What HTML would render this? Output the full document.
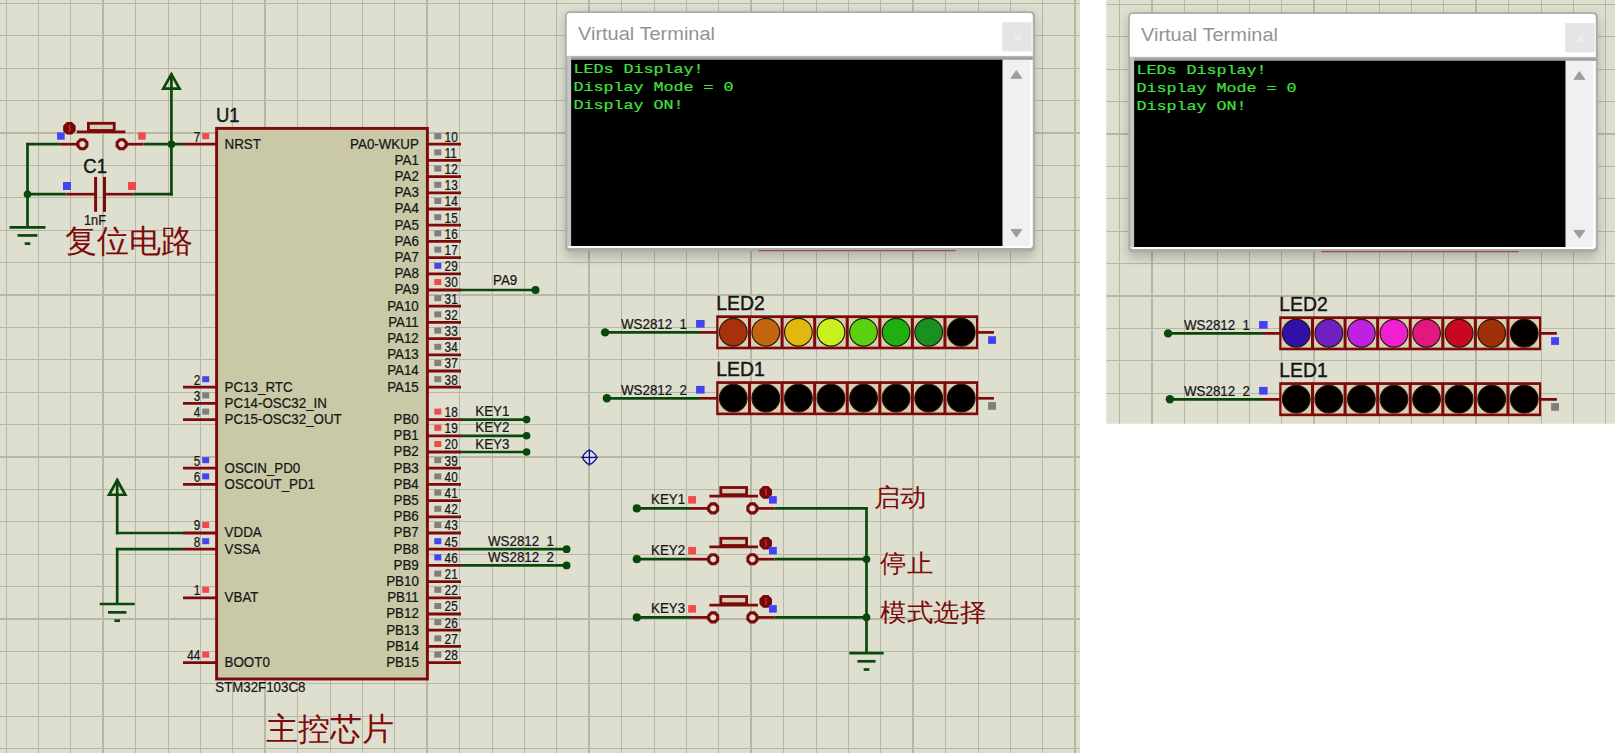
<!DOCTYPE html><html><head><meta charset="utf-8"><style>
html,body{margin:0;padding:0;background:#fff;width:1618px;height:753px;overflow:hidden} svg{position:absolute;left:0;top:0} text{font-family:"Liberation Sans", sans-serif}
</style></head><body>
<svg width="1618" height="753" viewBox="0 0 1618 753">
<defs><clipPath id="cl"><rect x="0" y="0" width="1080" height="753"/></clipPath><clipPath id="cr"><rect x="1106.3" y="0" width="508.7" height="423.8"/></clipPath><filter id="sh" x="-20%" y="-20%" width="140%" height="150%"><feGaussianBlur stdDeviation="5.5"/></filter><linearGradient id="bev" x1="0" y1="0" x2="0" y2="1"><stop offset="0" stop-color="#bdbdbd"/><stop offset="1" stop-color="#8a8a8a"/></linearGradient></defs>
<g clip-path="url(#cl)"><rect x="0" y="0" width="1080" height="753" fill="#dfdfd0"/>
<g fill="#b7b7a6"><rect x="6" y="0" width="1" height="753"/><rect x="38" y="0" width="1" height="753"/><rect x="70" y="0" width="1" height="753"/><rect x="102" y="0" width="2" height="753"/><rect x="135" y="0" width="1" height="753"/><rect x="168" y="0" width="1" height="753"/><rect x="200" y="0" width="1" height="753"/><rect x="232" y="0" width="1" height="753"/><rect x="264" y="0" width="2" height="753"/><rect x="297" y="0" width="1" height="753"/><rect x="330" y="0" width="1" height="753"/><rect x="362" y="0" width="1" height="753"/><rect x="394" y="0" width="1" height="753"/><rect x="426" y="0" width="2" height="753"/><rect x="459" y="0" width="1" height="753"/><rect x="492" y="0" width="1" height="753"/><rect x="524" y="0" width="1" height="753"/><rect x="556" y="0" width="1" height="753"/><rect x="588" y="0" width="2" height="753"/><rect x="621" y="0" width="1" height="753"/><rect x="654" y="0" width="1" height="753"/><rect x="686" y="0" width="1" height="753"/><rect x="718" y="0" width="1" height="753"/><rect x="750" y="0" width="2" height="753"/><rect x="783" y="0" width="1" height="753"/><rect x="816" y="0" width="1" height="753"/><rect x="848" y="0" width="1" height="753"/><rect x="880" y="0" width="1" height="753"/><rect x="912" y="0" width="2" height="753"/><rect x="945" y="0" width="1" height="753"/><rect x="978" y="0" width="1" height="753"/><rect x="1010" y="0" width="1" height="753"/><rect x="1042" y="0" width="1" height="753"/><rect x="1074" y="0" width="2" height="753"/><rect x="0" y="3" width="1080" height="1"/><rect x="0" y="35" width="1080" height="1"/><rect x="0" y="68" width="1080" height="1"/><rect x="0" y="100" width="1080" height="1"/><rect x="0" y="132" width="1080" height="2"/><rect x="0" y="165" width="1080" height="1"/><rect x="0" y="197" width="1080" height="1"/><rect x="0" y="230" width="1080" height="1"/><rect x="0" y="262" width="1080" height="1"/><rect x="0" y="294" width="1080" height="2"/><rect x="0" y="327" width="1080" height="1"/><rect x="0" y="359" width="1080" height="1"/><rect x="0" y="392" width="1080" height="1"/><rect x="0" y="424" width="1080" height="1"/><rect x="0" y="456" width="1080" height="2"/><rect x="0" y="489" width="1080" height="1"/><rect x="0" y="521" width="1080" height="1"/><rect x="0" y="554" width="1080" height="1"/><rect x="0" y="586" width="1080" height="1"/><rect x="0" y="618" width="1080" height="2"/><rect x="0" y="651" width="1080" height="1"/><rect x="0" y="683" width="1080" height="1"/><rect x="0" y="716" width="1080" height="1"/><rect x="0" y="748" width="1080" height="1"/></g>
<line x1="26.15" y1="144.20" x2="59.80" y2="144.20" stroke="#0a470a" stroke-width="2.7" stroke-linecap="butt"/>
<line x1="27.50" y1="142.85" x2="27.50" y2="227.30" stroke="#0a470a" stroke-width="2.7" stroke-linecap="butt"/>
<line x1="59.80" y1="144.20" x2="77.50" y2="144.20" stroke="#7d0a0a" stroke-width="2.7" stroke-linecap="butt"/>
<line x1="126.50" y1="144.20" x2="143.50" y2="144.20" stroke="#7d0a0a" stroke-width="2.7" stroke-linecap="butt"/>
<line x1="143.50" y1="144.20" x2="183.00" y2="144.20" stroke="#0a470a" stroke-width="2.7" stroke-linecap="butt"/>
<polygon points="171.40,74.20 163.30,88.55 179.50,88.55" fill="none" stroke="#0a470a" stroke-width="2.7" stroke-linejoin="miter"/><line x1="171.40" y1="73.60" x2="171.40" y2="195.55" stroke="#0a470a" stroke-width="2.7" stroke-linecap="butt"/>
<polygon points="86.88,146.06 84.26,148.68 80.54,148.68 77.92,146.06 77.92,142.34 80.54,139.72 84.26,139.72 86.88,142.34" fill="#dfdfd0" stroke="#7d0a0a" stroke-width="3.1"/><polygon points="126.08,146.06 123.46,148.68 119.74,148.68 117.12,146.06 117.12,142.34 119.74,139.72 123.46,139.72 126.08,142.34" fill="#dfdfd0" stroke="#7d0a0a" stroke-width="3.1"/><line x1="76.80" y1="131.90" x2="125.40" y2="131.90" stroke="#7d0a0a" stroke-width="2.8" stroke-linecap="butt"/><rect x="88.40" y="123.30" width="25.8" height="7.2" fill="#d6ceb6" stroke="#7d0a0a" stroke-width="2.8"/><polygon points="75.68,130.90 72.00,134.58 66.80,134.58 63.12,130.90 63.12,125.70 66.80,122.02 72.00,122.02 75.68,125.70" fill="#760808"/><path d="M70.30,124.90 q-2.0,1.4 -0.7,3.2 q1.3,1.6 -0.7,3.4" stroke="#d83030" stroke-width="1.2" fill="none"/>
<circle cx="171.40" cy="144.20" r="3.8" fill="#0a470a"/>
<line x1="27.50" y1="194.20" x2="66.40" y2="194.20" stroke="#0a470a" stroke-width="2.7" stroke-linecap="butt"/>
<line x1="66.40" y1="194.20" x2="95.60" y2="194.20" stroke="#7d0a0a" stroke-width="2.7" stroke-linecap="butt"/>
<line x1="104.50" y1="194.20" x2="133.50" y2="194.20" stroke="#7d0a0a" stroke-width="2.7" stroke-linecap="butt"/>
<line x1="133.50" y1="194.20" x2="172.75" y2="194.20" stroke="#0a470a" stroke-width="2.7" stroke-linecap="butt"/>
<line x1="95.60" y1="176.90" x2="95.60" y2="211.80" stroke="#7d0a0a" stroke-width="3.0" stroke-linecap="butt"/>
<line x1="104.50" y1="176.90" x2="104.50" y2="211.80" stroke="#7d0a0a" stroke-width="3.0" stroke-linecap="butt"/>
<circle cx="27.50" cy="194.20" r="3.8" fill="#0a470a"/>
<line x1="9.50" y1="227.30" x2="45.50" y2="227.30" stroke="#0a470a" stroke-width="2.7" stroke-linecap="butt"/><line x1="17.50" y1="235.45" x2="37.50" y2="235.45" stroke="#0a470a" stroke-width="2.7" stroke-linecap="butt"/><line x1="24.70" y1="243.60" x2="30.30" y2="243.60" stroke="#0a470a" stroke-width="2.7" stroke-linecap="butt"/>
<rect x="57.10" y="132.40" width="7.6" height="7.3" fill="#4343f2"/>
<rect x="138.20" y="132.40" width="7.5" height="7.3" fill="#f24a4a"/>
<rect x="63.00" y="182.00" width="8" height="8" fill="#4343f2"/>
<rect x="128.00" y="182.00" width="8" height="8" fill="#f24a4a"/>
<text transform="translate(83.30,172.60) scale(1.0,1.14)" font-size="18.5" fill="#161616" text-anchor="start" stroke="#161616" stroke-width="0.4">C1</text>
<text transform="translate(84.00,224.70) scale(1.0,1.08)" font-size="12.8" fill="#161616" text-anchor="start" stroke="#161616" stroke-width="0.22">1nF</text>
<text x="64.50" y="251.80" font-size="32" fill="#7d0a0a" text-anchor="start" >复位电路</text>
<rect x="216.6" y="128.4" width="210.8" height="550.6" fill="#c9c9a8" stroke="#7d0a0a" stroke-width="2.9"/>
<text transform="translate(215.90,121.80) scale(1.0,1.14)" font-size="18.5" fill="#161616" text-anchor="start" stroke="#161616" stroke-width="0.4">U1</text>
<text transform="translate(215.30,692.30) scale(1.0,1.06)" font-size="13.3" fill="#161616" text-anchor="start" stroke="#161616" stroke-width="0.22">STM32F103C8</text>
<text x="265.80" y="740.20" font-size="32" fill="#7d0a0a" text-anchor="start" >主控芯片</text>
<line x1="427.40" y1="144.20" x2="461.00" y2="144.20" stroke="#7d0a0a" stroke-width="2.8" stroke-linecap="butt"/>
<rect x="434.30" y="133.20" width="7" height="6" fill="#7f7f7f"/>
<text transform="translate(444.60,141.60) scale(0.92,1.08)" font-size="12.8" fill="#161616" text-anchor="start" stroke="#161616" stroke-width="0.22">10</text>
<text transform="translate(418.80,148.60) scale(1.0,1.04)" font-size="13.35" fill="#161616" text-anchor="end" stroke="#161616" stroke-width="0.22">PA0-WKUP</text>
<line x1="427.40" y1="160.40" x2="461.00" y2="160.40" stroke="#7d0a0a" stroke-width="2.8" stroke-linecap="butt"/>
<rect x="434.30" y="149.40" width="7" height="6" fill="#7f7f7f"/>
<text transform="translate(444.60,157.80) scale(0.92,1.08)" font-size="12.8" fill="#161616" text-anchor="start" stroke="#161616" stroke-width="0.22">11</text>
<text transform="translate(418.80,164.80) scale(1.0,1.04)" font-size="13.35" fill="#161616" text-anchor="end" stroke="#161616" stroke-width="0.22">PA1</text>
<line x1="427.40" y1="176.60" x2="461.00" y2="176.60" stroke="#7d0a0a" stroke-width="2.8" stroke-linecap="butt"/>
<rect x="434.30" y="165.60" width="7" height="6" fill="#7f7f7f"/>
<text transform="translate(444.60,174.00) scale(0.92,1.08)" font-size="12.8" fill="#161616" text-anchor="start" stroke="#161616" stroke-width="0.22">12</text>
<text transform="translate(418.80,181.00) scale(1.0,1.04)" font-size="13.35" fill="#161616" text-anchor="end" stroke="#161616" stroke-width="0.22">PA2</text>
<line x1="427.40" y1="192.80" x2="461.00" y2="192.80" stroke="#7d0a0a" stroke-width="2.8" stroke-linecap="butt"/>
<rect x="434.30" y="181.80" width="7" height="6" fill="#7f7f7f"/>
<text transform="translate(444.60,190.20) scale(0.92,1.08)" font-size="12.8" fill="#161616" text-anchor="start" stroke="#161616" stroke-width="0.22">13</text>
<text transform="translate(418.80,197.20) scale(1.0,1.04)" font-size="13.35" fill="#161616" text-anchor="end" stroke="#161616" stroke-width="0.22">PA3</text>
<line x1="427.40" y1="209.00" x2="461.00" y2="209.00" stroke="#7d0a0a" stroke-width="2.8" stroke-linecap="butt"/>
<rect x="434.30" y="198.00" width="7" height="6" fill="#7f7f7f"/>
<text transform="translate(444.60,206.40) scale(0.92,1.08)" font-size="12.8" fill="#161616" text-anchor="start" stroke="#161616" stroke-width="0.22">14</text>
<text transform="translate(418.80,213.40) scale(1.0,1.04)" font-size="13.35" fill="#161616" text-anchor="end" stroke="#161616" stroke-width="0.22">PA4</text>
<line x1="427.40" y1="225.20" x2="461.00" y2="225.20" stroke="#7d0a0a" stroke-width="2.8" stroke-linecap="butt"/>
<rect x="434.30" y="214.20" width="7" height="6" fill="#7f7f7f"/>
<text transform="translate(444.60,222.60) scale(0.92,1.08)" font-size="12.8" fill="#161616" text-anchor="start" stroke="#161616" stroke-width="0.22">15</text>
<text transform="translate(418.80,229.60) scale(1.0,1.04)" font-size="13.35" fill="#161616" text-anchor="end" stroke="#161616" stroke-width="0.22">PA5</text>
<line x1="427.40" y1="241.40" x2="461.00" y2="241.40" stroke="#7d0a0a" stroke-width="2.8" stroke-linecap="butt"/>
<rect x="434.30" y="230.40" width="7" height="6" fill="#7f7f7f"/>
<text transform="translate(444.60,238.80) scale(0.92,1.08)" font-size="12.8" fill="#161616" text-anchor="start" stroke="#161616" stroke-width="0.22">16</text>
<text transform="translate(418.80,245.80) scale(1.0,1.04)" font-size="13.35" fill="#161616" text-anchor="end" stroke="#161616" stroke-width="0.22">PA6</text>
<line x1="427.40" y1="257.60" x2="461.00" y2="257.60" stroke="#7d0a0a" stroke-width="2.8" stroke-linecap="butt"/>
<rect x="434.30" y="246.60" width="7" height="6" fill="#7f7f7f"/>
<text transform="translate(444.60,255.00) scale(0.92,1.08)" font-size="12.8" fill="#161616" text-anchor="start" stroke="#161616" stroke-width="0.22">17</text>
<text transform="translate(418.80,262.00) scale(1.0,1.04)" font-size="13.35" fill="#161616" text-anchor="end" stroke="#161616" stroke-width="0.22">PA7</text>
<line x1="427.40" y1="273.80" x2="461.00" y2="273.80" stroke="#7d0a0a" stroke-width="2.8" stroke-linecap="butt"/>
<rect x="434.30" y="262.80" width="7" height="6" fill="#4343f2"/>
<text transform="translate(444.60,271.20) scale(0.92,1.08)" font-size="12.8" fill="#161616" text-anchor="start" stroke="#161616" stroke-width="0.22">29</text>
<text transform="translate(418.80,278.20) scale(1.0,1.04)" font-size="13.35" fill="#161616" text-anchor="end" stroke="#161616" stroke-width="0.22">PA8</text>
<line x1="427.40" y1="290.00" x2="461.00" y2="290.00" stroke="#7d0a0a" stroke-width="2.8" stroke-linecap="butt"/>
<rect x="434.30" y="279.00" width="7" height="6" fill="#f24a4a"/>
<text transform="translate(444.60,287.40) scale(0.92,1.08)" font-size="12.8" fill="#161616" text-anchor="start" stroke="#161616" stroke-width="0.22">30</text>
<text transform="translate(418.80,294.40) scale(1.0,1.04)" font-size="13.35" fill="#161616" text-anchor="end" stroke="#161616" stroke-width="0.22">PA9</text>
<line x1="427.40" y1="306.20" x2="461.00" y2="306.20" stroke="#7d0a0a" stroke-width="2.8" stroke-linecap="butt"/>
<rect x="434.30" y="295.20" width="7" height="6" fill="#7f7f7f"/>
<text transform="translate(444.60,303.60) scale(0.92,1.08)" font-size="12.8" fill="#161616" text-anchor="start" stroke="#161616" stroke-width="0.22">31</text>
<text transform="translate(418.80,310.60) scale(1.0,1.04)" font-size="13.35" fill="#161616" text-anchor="end" stroke="#161616" stroke-width="0.22">PA10</text>
<line x1="427.40" y1="322.40" x2="461.00" y2="322.40" stroke="#7d0a0a" stroke-width="2.8" stroke-linecap="butt"/>
<rect x="434.30" y="311.40" width="7" height="6" fill="#7f7f7f"/>
<text transform="translate(444.60,319.80) scale(0.92,1.08)" font-size="12.8" fill="#161616" text-anchor="start" stroke="#161616" stroke-width="0.22">32</text>
<text transform="translate(418.80,326.80) scale(1.0,1.04)" font-size="13.35" fill="#161616" text-anchor="end" stroke="#161616" stroke-width="0.22">PA11</text>
<line x1="427.40" y1="338.60" x2="461.00" y2="338.60" stroke="#7d0a0a" stroke-width="2.8" stroke-linecap="butt"/>
<rect x="434.30" y="327.60" width="7" height="6" fill="#7f7f7f"/>
<text transform="translate(444.60,336.00) scale(0.92,1.08)" font-size="12.8" fill="#161616" text-anchor="start" stroke="#161616" stroke-width="0.22">33</text>
<text transform="translate(418.80,343.00) scale(1.0,1.04)" font-size="13.35" fill="#161616" text-anchor="end" stroke="#161616" stroke-width="0.22">PA12</text>
<line x1="427.40" y1="354.80" x2="461.00" y2="354.80" stroke="#7d0a0a" stroke-width="2.8" stroke-linecap="butt"/>
<rect x="434.30" y="343.80" width="7" height="6" fill="#7f7f7f"/>
<text transform="translate(444.60,352.20) scale(0.92,1.08)" font-size="12.8" fill="#161616" text-anchor="start" stroke="#161616" stroke-width="0.22">34</text>
<text transform="translate(418.80,359.20) scale(1.0,1.04)" font-size="13.35" fill="#161616" text-anchor="end" stroke="#161616" stroke-width="0.22">PA13</text>
<line x1="427.40" y1="371.00" x2="461.00" y2="371.00" stroke="#7d0a0a" stroke-width="2.8" stroke-linecap="butt"/>
<rect x="434.30" y="360.00" width="7" height="6" fill="#7f7f7f"/>
<text transform="translate(444.60,368.40) scale(0.92,1.08)" font-size="12.8" fill="#161616" text-anchor="start" stroke="#161616" stroke-width="0.22">37</text>
<text transform="translate(418.80,375.40) scale(1.0,1.04)" font-size="13.35" fill="#161616" text-anchor="end" stroke="#161616" stroke-width="0.22">PA14</text>
<line x1="427.40" y1="387.20" x2="461.00" y2="387.20" stroke="#7d0a0a" stroke-width="2.8" stroke-linecap="butt"/>
<rect x="434.30" y="376.20" width="7" height="6" fill="#7f7f7f"/>
<text transform="translate(444.60,384.60) scale(0.92,1.08)" font-size="12.8" fill="#161616" text-anchor="start" stroke="#161616" stroke-width="0.22">38</text>
<text transform="translate(418.80,391.60) scale(1.0,1.04)" font-size="13.35" fill="#161616" text-anchor="end" stroke="#161616" stroke-width="0.22">PA15</text>
<line x1="427.40" y1="419.60" x2="461.00" y2="419.60" stroke="#7d0a0a" stroke-width="2.8" stroke-linecap="butt"/>
<rect x="434.30" y="408.60" width="7" height="6" fill="#f24a4a"/>
<text transform="translate(444.60,417.00) scale(0.92,1.08)" font-size="12.8" fill="#161616" text-anchor="start" stroke="#161616" stroke-width="0.22">18</text>
<text transform="translate(418.80,424.00) scale(1.0,1.04)" font-size="13.35" fill="#161616" text-anchor="end" stroke="#161616" stroke-width="0.22">PB0</text>
<line x1="427.40" y1="435.80" x2="461.00" y2="435.80" stroke="#7d0a0a" stroke-width="2.8" stroke-linecap="butt"/>
<rect x="434.30" y="424.80" width="7" height="6" fill="#f24a4a"/>
<text transform="translate(444.60,433.20) scale(0.92,1.08)" font-size="12.8" fill="#161616" text-anchor="start" stroke="#161616" stroke-width="0.22">19</text>
<text transform="translate(418.80,440.20) scale(1.0,1.04)" font-size="13.35" fill="#161616" text-anchor="end" stroke="#161616" stroke-width="0.22">PB1</text>
<line x1="427.40" y1="452.00" x2="461.00" y2="452.00" stroke="#7d0a0a" stroke-width="2.8" stroke-linecap="butt"/>
<rect x="434.30" y="441.00" width="7" height="6" fill="#f24a4a"/>
<text transform="translate(444.60,449.40) scale(0.92,1.08)" font-size="12.8" fill="#161616" text-anchor="start" stroke="#161616" stroke-width="0.22">20</text>
<text transform="translate(418.80,456.40) scale(1.0,1.04)" font-size="13.35" fill="#161616" text-anchor="end" stroke="#161616" stroke-width="0.22">PB2</text>
<line x1="427.40" y1="468.20" x2="461.00" y2="468.20" stroke="#7d0a0a" stroke-width="2.8" stroke-linecap="butt"/>
<rect x="434.30" y="457.20" width="7" height="6" fill="#7f7f7f"/>
<text transform="translate(444.60,465.60) scale(0.92,1.08)" font-size="12.8" fill="#161616" text-anchor="start" stroke="#161616" stroke-width="0.22">39</text>
<text transform="translate(418.80,472.60) scale(1.0,1.04)" font-size="13.35" fill="#161616" text-anchor="end" stroke="#161616" stroke-width="0.22">PB3</text>
<line x1="427.40" y1="484.40" x2="461.00" y2="484.40" stroke="#7d0a0a" stroke-width="2.8" stroke-linecap="butt"/>
<rect x="434.30" y="473.40" width="7" height="6" fill="#7f7f7f"/>
<text transform="translate(444.60,481.80) scale(0.92,1.08)" font-size="12.8" fill="#161616" text-anchor="start" stroke="#161616" stroke-width="0.22">40</text>
<text transform="translate(418.80,488.80) scale(1.0,1.04)" font-size="13.35" fill="#161616" text-anchor="end" stroke="#161616" stroke-width="0.22">PB4</text>
<line x1="427.40" y1="500.60" x2="461.00" y2="500.60" stroke="#7d0a0a" stroke-width="2.8" stroke-linecap="butt"/>
<rect x="434.30" y="489.60" width="7" height="6" fill="#7f7f7f"/>
<text transform="translate(444.60,498.00) scale(0.92,1.08)" font-size="12.8" fill="#161616" text-anchor="start" stroke="#161616" stroke-width="0.22">41</text>
<text transform="translate(418.80,505.00) scale(1.0,1.04)" font-size="13.35" fill="#161616" text-anchor="end" stroke="#161616" stroke-width="0.22">PB5</text>
<line x1="427.40" y1="516.80" x2="461.00" y2="516.80" stroke="#7d0a0a" stroke-width="2.8" stroke-linecap="butt"/>
<rect x="434.30" y="505.80" width="7" height="6" fill="#7f7f7f"/>
<text transform="translate(444.60,514.20) scale(0.92,1.08)" font-size="12.8" fill="#161616" text-anchor="start" stroke="#161616" stroke-width="0.22">42</text>
<text transform="translate(418.80,521.20) scale(1.0,1.04)" font-size="13.35" fill="#161616" text-anchor="end" stroke="#161616" stroke-width="0.22">PB6</text>
<line x1="427.40" y1="533.00" x2="461.00" y2="533.00" stroke="#7d0a0a" stroke-width="2.8" stroke-linecap="butt"/>
<rect x="434.30" y="522.00" width="7" height="6" fill="#7f7f7f"/>
<text transform="translate(444.60,530.40) scale(0.92,1.08)" font-size="12.8" fill="#161616" text-anchor="start" stroke="#161616" stroke-width="0.22">43</text>
<text transform="translate(418.80,537.40) scale(1.0,1.04)" font-size="13.35" fill="#161616" text-anchor="end" stroke="#161616" stroke-width="0.22">PB7</text>
<line x1="427.40" y1="549.20" x2="461.00" y2="549.20" stroke="#7d0a0a" stroke-width="2.8" stroke-linecap="butt"/>
<rect x="434.30" y="538.20" width="7" height="6" fill="#4343f2"/>
<text transform="translate(444.60,546.60) scale(0.92,1.08)" font-size="12.8" fill="#161616" text-anchor="start" stroke="#161616" stroke-width="0.22">45</text>
<text transform="translate(418.80,553.60) scale(1.0,1.04)" font-size="13.35" fill="#161616" text-anchor="end" stroke="#161616" stroke-width="0.22">PB8</text>
<line x1="427.40" y1="565.40" x2="461.00" y2="565.40" stroke="#7d0a0a" stroke-width="2.8" stroke-linecap="butt"/>
<rect x="434.30" y="554.40" width="7" height="6" fill="#4343f2"/>
<text transform="translate(444.60,562.80) scale(0.92,1.08)" font-size="12.8" fill="#161616" text-anchor="start" stroke="#161616" stroke-width="0.22">46</text>
<text transform="translate(418.80,569.80) scale(1.0,1.04)" font-size="13.35" fill="#161616" text-anchor="end" stroke="#161616" stroke-width="0.22">PB9</text>
<line x1="427.40" y1="581.60" x2="461.00" y2="581.60" stroke="#7d0a0a" stroke-width="2.8" stroke-linecap="butt"/>
<rect x="434.30" y="570.60" width="7" height="6" fill="#7f7f7f"/>
<text transform="translate(444.60,579.00) scale(0.92,1.08)" font-size="12.8" fill="#161616" text-anchor="start" stroke="#161616" stroke-width="0.22">21</text>
<text transform="translate(418.80,586.00) scale(1.0,1.04)" font-size="13.35" fill="#161616" text-anchor="end" stroke="#161616" stroke-width="0.22">PB10</text>
<line x1="427.40" y1="597.80" x2="461.00" y2="597.80" stroke="#7d0a0a" stroke-width="2.8" stroke-linecap="butt"/>
<rect x="434.30" y="586.80" width="7" height="6" fill="#7f7f7f"/>
<text transform="translate(444.60,595.20) scale(0.92,1.08)" font-size="12.8" fill="#161616" text-anchor="start" stroke="#161616" stroke-width="0.22">22</text>
<text transform="translate(418.80,602.20) scale(1.0,1.04)" font-size="13.35" fill="#161616" text-anchor="end" stroke="#161616" stroke-width="0.22">PB11</text>
<line x1="427.40" y1="614.00" x2="461.00" y2="614.00" stroke="#7d0a0a" stroke-width="2.8" stroke-linecap="butt"/>
<rect x="434.30" y="603.00" width="7" height="6" fill="#7f7f7f"/>
<text transform="translate(444.60,611.40) scale(0.92,1.08)" font-size="12.8" fill="#161616" text-anchor="start" stroke="#161616" stroke-width="0.22">25</text>
<text transform="translate(418.80,618.40) scale(1.0,1.04)" font-size="13.35" fill="#161616" text-anchor="end" stroke="#161616" stroke-width="0.22">PB12</text>
<line x1="427.40" y1="630.20" x2="461.00" y2="630.20" stroke="#7d0a0a" stroke-width="2.8" stroke-linecap="butt"/>
<rect x="434.30" y="619.20" width="7" height="6" fill="#7f7f7f"/>
<text transform="translate(444.60,627.60) scale(0.92,1.08)" font-size="12.8" fill="#161616" text-anchor="start" stroke="#161616" stroke-width="0.22">26</text>
<text transform="translate(418.80,634.60) scale(1.0,1.04)" font-size="13.35" fill="#161616" text-anchor="end" stroke="#161616" stroke-width="0.22">PB13</text>
<line x1="427.40" y1="646.40" x2="461.00" y2="646.40" stroke="#7d0a0a" stroke-width="2.8" stroke-linecap="butt"/>
<rect x="434.30" y="635.40" width="7" height="6" fill="#7f7f7f"/>
<text transform="translate(444.60,643.80) scale(0.92,1.08)" font-size="12.8" fill="#161616" text-anchor="start" stroke="#161616" stroke-width="0.22">27</text>
<text transform="translate(418.80,650.80) scale(1.0,1.04)" font-size="13.35" fill="#161616" text-anchor="end" stroke="#161616" stroke-width="0.22">PB14</text>
<line x1="427.40" y1="662.60" x2="461.00" y2="662.60" stroke="#7d0a0a" stroke-width="2.8" stroke-linecap="butt"/>
<rect x="434.30" y="651.60" width="7" height="6" fill="#7f7f7f"/>
<text transform="translate(444.60,660.00) scale(0.92,1.08)" font-size="12.8" fill="#161616" text-anchor="start" stroke="#161616" stroke-width="0.22">28</text>
<text transform="translate(418.80,667.00) scale(1.0,1.04)" font-size="13.35" fill="#161616" text-anchor="end" stroke="#161616" stroke-width="0.22">PB15</text>
<line x1="183.00" y1="144.20" x2="216.60" y2="144.20" stroke="#7d0a0a" stroke-width="2.8" stroke-linecap="butt"/>
<rect x="202.20" y="133.20" width="7" height="6" fill="#f24a4a"/>
<text transform="translate(200.40,141.60) scale(0.92,1.08)" font-size="12.8" fill="#161616" text-anchor="end" stroke="#161616" stroke-width="0.22">7</text>
<text transform="translate(224.60,148.60) scale(1.0,1.04)" font-size="13.35" fill="#161616" text-anchor="start" stroke="#161616" stroke-width="0.22">NRST</text>
<line x1="183.00" y1="387.20" x2="216.60" y2="387.20" stroke="#7d0a0a" stroke-width="2.8" stroke-linecap="butt"/>
<rect x="202.20" y="376.20" width="7" height="6" fill="#4343f2"/>
<text transform="translate(200.40,384.60) scale(0.92,1.08)" font-size="12.8" fill="#161616" text-anchor="end" stroke="#161616" stroke-width="0.22">2</text>
<text transform="translate(224.60,391.60) scale(1.0,1.04)" font-size="13.35" fill="#161616" text-anchor="start" stroke="#161616" stroke-width="0.22">PC13_RTC</text>
<line x1="183.00" y1="403.40" x2="216.60" y2="403.40" stroke="#7d0a0a" stroke-width="2.8" stroke-linecap="butt"/>
<rect x="202.20" y="392.40" width="7" height="6" fill="#7f7f7f"/>
<text transform="translate(200.40,400.80) scale(0.92,1.08)" font-size="12.8" fill="#161616" text-anchor="end" stroke="#161616" stroke-width="0.22">3</text>
<text transform="translate(224.60,407.80) scale(1.0,1.04)" font-size="13.35" fill="#161616" text-anchor="start" stroke="#161616" stroke-width="0.22">PC14-OSC32_IN</text>
<line x1="183.00" y1="419.60" x2="216.60" y2="419.60" stroke="#7d0a0a" stroke-width="2.8" stroke-linecap="butt"/>
<rect x="202.20" y="408.60" width="7" height="6" fill="#7f7f7f"/>
<text transform="translate(200.40,417.00) scale(0.92,1.08)" font-size="12.8" fill="#161616" text-anchor="end" stroke="#161616" stroke-width="0.22">4</text>
<text transform="translate(224.60,424.00) scale(1.0,1.04)" font-size="13.35" fill="#161616" text-anchor="start" stroke="#161616" stroke-width="0.22">PC15-OSC32_OUT</text>
<line x1="183.00" y1="468.20" x2="216.60" y2="468.20" stroke="#7d0a0a" stroke-width="2.8" stroke-linecap="butt"/>
<rect x="202.20" y="457.20" width="7" height="6" fill="#4343f2"/>
<text transform="translate(200.40,465.60) scale(0.92,1.08)" font-size="12.8" fill="#161616" text-anchor="end" stroke="#161616" stroke-width="0.22">5</text>
<text transform="translate(224.60,472.60) scale(1.0,1.04)" font-size="13.35" fill="#161616" text-anchor="start" stroke="#161616" stroke-width="0.22">OSCIN_PD0</text>
<line x1="183.00" y1="484.40" x2="216.60" y2="484.40" stroke="#7d0a0a" stroke-width="2.8" stroke-linecap="butt"/>
<rect x="202.20" y="473.40" width="7" height="6" fill="#4343f2"/>
<text transform="translate(200.40,481.80) scale(0.92,1.08)" font-size="12.8" fill="#161616" text-anchor="end" stroke="#161616" stroke-width="0.22">6</text>
<text transform="translate(224.60,488.80) scale(1.0,1.04)" font-size="13.35" fill="#161616" text-anchor="start" stroke="#161616" stroke-width="0.22">OSCOUT_PD1</text>
<line x1="183.00" y1="533.00" x2="216.60" y2="533.00" stroke="#7d0a0a" stroke-width="2.8" stroke-linecap="butt"/>
<rect x="202.20" y="522.00" width="7" height="6" fill="#f24a4a"/>
<text transform="translate(200.40,530.40) scale(0.92,1.08)" font-size="12.8" fill="#161616" text-anchor="end" stroke="#161616" stroke-width="0.22">9</text>
<text transform="translate(224.60,537.40) scale(1.0,1.04)" font-size="13.35" fill="#161616" text-anchor="start" stroke="#161616" stroke-width="0.22">VDDA</text>
<line x1="183.00" y1="549.20" x2="216.60" y2="549.20" stroke="#7d0a0a" stroke-width="2.8" stroke-linecap="butt"/>
<rect x="202.20" y="538.20" width="7" height="6" fill="#4343f2"/>
<text transform="translate(200.40,546.60) scale(0.92,1.08)" font-size="12.8" fill="#161616" text-anchor="end" stroke="#161616" stroke-width="0.22">8</text>
<text transform="translate(224.60,553.60) scale(1.0,1.04)" font-size="13.35" fill="#161616" text-anchor="start" stroke="#161616" stroke-width="0.22">VSSA</text>
<line x1="183.00" y1="597.80" x2="216.60" y2="597.80" stroke="#7d0a0a" stroke-width="2.8" stroke-linecap="butt"/>
<rect x="202.20" y="586.80" width="7" height="6" fill="#f24a4a"/>
<text transform="translate(200.40,595.20) scale(0.92,1.08)" font-size="12.8" fill="#161616" text-anchor="end" stroke="#161616" stroke-width="0.22">1</text>
<text transform="translate(224.60,602.20) scale(1.0,1.04)" font-size="13.35" fill="#161616" text-anchor="start" stroke="#161616" stroke-width="0.22">VBAT</text>
<line x1="183.00" y1="662.60" x2="216.60" y2="662.60" stroke="#7d0a0a" stroke-width="2.8" stroke-linecap="butt"/>
<rect x="202.20" y="651.60" width="7" height="6" fill="#f24a4a"/>
<text transform="translate(200.40,660.00) scale(0.92,1.08)" font-size="12.8" fill="#161616" text-anchor="end" stroke="#161616" stroke-width="0.22">44</text>
<text transform="translate(224.60,667.00) scale(1.0,1.04)" font-size="13.35" fill="#161616" text-anchor="start" stroke="#161616" stroke-width="0.22">BOOT0</text>
<polygon points="117.20,480.10 109.10,494.75 125.30,494.75" fill="none" stroke="#0a470a" stroke-width="2.7" stroke-linejoin="miter"/><line x1="117.20" y1="479.50" x2="117.20" y2="534.35" stroke="#0a470a" stroke-width="2.7" stroke-linecap="butt"/>
<line x1="115.85" y1="533.00" x2="183.00" y2="533.00" stroke="#0a470a" stroke-width="2.7" stroke-linecap="butt"/>
<line x1="183.00" y1="549.20" x2="115.85" y2="549.20" stroke="#0a470a" stroke-width="2.7" stroke-linecap="butt"/>
<line x1="117.20" y1="547.85" x2="117.20" y2="604.00" stroke="#0a470a" stroke-width="2.7" stroke-linecap="butt"/>
<line x1="99.70" y1="604.00" x2="134.70" y2="604.00" stroke="#0a470a" stroke-width="2.7" stroke-linecap="butt"/><line x1="107.95" y1="612.35" x2="126.45" y2="612.35" stroke="#0a470a" stroke-width="2.7" stroke-linecap="butt"/><line x1="114.40" y1="620.70" x2="120.00" y2="620.70" stroke="#0a470a" stroke-width="2.7" stroke-linecap="butt"/>
<text transform="translate(493.00,285.40) scale(1.0,1.04)" font-size="13.35" fill="#161616" text-anchor="start" stroke="#161616" stroke-width="0.22">PA9</text>
<line x1="461.00" y1="290.00" x2="535.50" y2="290.00" stroke="#0a470a" stroke-width="2.7" stroke-linecap="butt"/>
<circle cx="535.50" cy="290.00" r="4.0" fill="#0a470a"/>
<text transform="translate(475.30,416.10) scale(1.0,1.04)" font-size="13.35" fill="#161616" text-anchor="start" stroke="#161616" stroke-width="0.22">KEY1</text>
<line x1="461.00" y1="419.60" x2="526.60" y2="419.60" stroke="#0a470a" stroke-width="2.7" stroke-linecap="butt"/>
<circle cx="526.60" cy="419.60" r="3.8" fill="#0a470a"/>
<text transform="translate(475.30,432.30) scale(1.0,1.04)" font-size="13.35" fill="#161616" text-anchor="start" stroke="#161616" stroke-width="0.22">KEY2</text>
<line x1="461.00" y1="435.80" x2="526.60" y2="435.80" stroke="#0a470a" stroke-width="2.7" stroke-linecap="butt"/>
<circle cx="526.60" cy="435.80" r="3.8" fill="#0a470a"/>
<text transform="translate(475.30,448.50) scale(1.0,1.04)" font-size="13.35" fill="#161616" text-anchor="start" stroke="#161616" stroke-width="0.22">KEY3</text>
<line x1="461.00" y1="452.00" x2="526.60" y2="452.00" stroke="#0a470a" stroke-width="2.7" stroke-linecap="butt"/>
<circle cx="526.60" cy="452.00" r="3.8" fill="#0a470a"/>
<text transform="translate(488.00,545.60) scale(1.0,1.04)" font-size="13.35" fill="#161616" text-anchor="start" stroke="#161616" stroke-width="0.22">WS2812_1</text>
<line x1="461.00" y1="549.20" x2="566.60" y2="549.20" stroke="#0a470a" stroke-width="2.7" stroke-linecap="butt"/>
<circle cx="566.60" cy="549.20" r="3.9" fill="#0a470a"/>
<text transform="translate(488.00,561.80) scale(1.0,1.04)" font-size="13.35" fill="#161616" text-anchor="start" stroke="#161616" stroke-width="0.22">WS2812_2</text>
<line x1="461.00" y1="565.40" x2="566.60" y2="565.40" stroke="#0a470a" stroke-width="2.7" stroke-linecap="butt"/>
<circle cx="566.60" cy="565.40" r="3.9" fill="#0a470a"/>
<polygon points="587.3,450.9 591.5,450.9 596,455.3 596,459.5 591.5,463.8 587.3,463.8 583.3,459.5 583.3,455.3" fill="#dcdcf6" stroke="#12127a" stroke-width="1.25"/>
<line x1="589.40" y1="449.00" x2="589.40" y2="465.80" stroke="#12127a" stroke-width="1.35" stroke-linecap="butt"/>
<line x1="581.00" y1="457.40" x2="598.00" y2="457.40" stroke="#12127a" stroke-width="1.35" stroke-linecap="butt"/>
<text transform="translate(621.00,329.10) scale(1.0,1.04)" font-size="13.35" fill="#161616" text-anchor="start" stroke="#161616" stroke-width="0.22">WS2812_1</text>
<line x1="605.10" y1="332.40" x2="700.00" y2="332.40" stroke="#0a470a" stroke-width="2.7" stroke-linecap="butt"/>
<line x1="700.00" y1="332.40" x2="717.60" y2="332.40" stroke="#7d0a0a" stroke-width="2.7" stroke-linecap="butt"/>
<circle cx="605.10" cy="332.40" r="4.2" fill="#0a470a"/>
<rect x="696.10" y="320.00" width="8.5" height="7.7" fill="#4343f2"/>
<text transform="translate(716.20,309.90) scale(1.0,1.08)" font-size="19.4" fill="#161616" text-anchor="start" stroke="#161616" stroke-width="0.4">LED2</text>
<rect x="716.2" y="315.30" width="262" height="34" fill="#7d0a0a" />
<rect x="718.50" y="318.05" width="29.5" height="28.6" fill="#dacdb4"/>
<circle cx="733.25" cy="332.20" r="13.85" fill="#a8300a" stroke="#221a06" stroke-width="1.15"/>
<rect x="751.07" y="318.05" width="29.5" height="28.6" fill="#dacdb4"/>
<circle cx="765.82" cy="332.20" r="13.85" fill="#c2650e" stroke="#221a06" stroke-width="1.15"/>
<rect x="783.64" y="318.05" width="29.5" height="28.6" fill="#dacdb4"/>
<circle cx="798.39" cy="332.20" r="13.85" fill="#e2b810" stroke="#221a06" stroke-width="1.15"/>
<rect x="816.21" y="318.05" width="29.5" height="28.6" fill="#dacdb4"/>
<circle cx="830.96" cy="332.20" r="13.85" fill="#c8f01e" stroke="#221a06" stroke-width="1.15"/>
<rect x="848.78" y="318.05" width="29.5" height="28.6" fill="#dacdb4"/>
<circle cx="863.53" cy="332.20" r="13.85" fill="#5ad010" stroke="#221a06" stroke-width="1.15"/>
<rect x="881.35" y="318.05" width="29.5" height="28.6" fill="#dacdb4"/>
<circle cx="896.10" cy="332.20" r="13.85" fill="#1eb010" stroke="#221a06" stroke-width="1.15"/>
<rect x="913.92" y="318.05" width="29.5" height="28.6" fill="#dacdb4"/>
<circle cx="928.67" cy="332.20" r="13.85" fill="#1a9020" stroke="#221a06" stroke-width="1.15"/>
<rect x="946.49" y="318.05" width="29.5" height="28.6" fill="#dacdb4"/>
<circle cx="961.24" cy="332.20" r="13.85" fill="#050000" stroke="#221a06" stroke-width="1.15"/>
<line x1="976.80" y1="332.40" x2="993.90" y2="332.40" stroke="#7d0a0a" stroke-width="2.7" stroke-linecap="butt"/>
<rect x="988.10" y="336.20" width="7.9" height="7.7" fill="#4343f2"/>
<text transform="translate(621.00,395.00) scale(1.0,1.04)" font-size="13.35" fill="#161616" text-anchor="start" stroke="#161616" stroke-width="0.22">WS2812_2</text>
<line x1="606.90" y1="398.30" x2="700.00" y2="398.30" stroke="#0a470a" stroke-width="2.7" stroke-linecap="butt"/>
<line x1="700.00" y1="398.30" x2="717.60" y2="398.30" stroke="#7d0a0a" stroke-width="2.7" stroke-linecap="butt"/>
<circle cx="606.90" cy="398.30" r="4.2" fill="#0a470a"/>
<rect x="696.10" y="385.90" width="8.5" height="7.7" fill="#4343f2"/>
<text transform="translate(716.20,375.80) scale(1.0,1.08)" font-size="19.4" fill="#161616" text-anchor="start" stroke="#161616" stroke-width="0.4">LED1</text>
<rect x="716.2" y="381.20" width="262" height="34" fill="#7d0a0a" />
<rect x="718.50" y="383.95" width="29.5" height="28.6" fill="#dacdb4"/>
<circle cx="733.25" cy="398.10" r="13.85" fill="#050000" stroke="#221a06" stroke-width="1.15"/>
<rect x="751.07" y="383.95" width="29.5" height="28.6" fill="#dacdb4"/>
<circle cx="765.82" cy="398.10" r="13.85" fill="#050000" stroke="#221a06" stroke-width="1.15"/>
<rect x="783.64" y="383.95" width="29.5" height="28.6" fill="#dacdb4"/>
<circle cx="798.39" cy="398.10" r="13.85" fill="#050000" stroke="#221a06" stroke-width="1.15"/>
<rect x="816.21" y="383.95" width="29.5" height="28.6" fill="#dacdb4"/>
<circle cx="830.96" cy="398.10" r="13.85" fill="#050000" stroke="#221a06" stroke-width="1.15"/>
<rect x="848.78" y="383.95" width="29.5" height="28.6" fill="#dacdb4"/>
<circle cx="863.53" cy="398.10" r="13.85" fill="#050000" stroke="#221a06" stroke-width="1.15"/>
<rect x="881.35" y="383.95" width="29.5" height="28.6" fill="#dacdb4"/>
<circle cx="896.10" cy="398.10" r="13.85" fill="#050000" stroke="#221a06" stroke-width="1.15"/>
<rect x="913.92" y="383.95" width="29.5" height="28.6" fill="#dacdb4"/>
<circle cx="928.67" cy="398.10" r="13.85" fill="#050000" stroke="#221a06" stroke-width="1.15"/>
<rect x="946.49" y="383.95" width="29.5" height="28.6" fill="#dacdb4"/>
<circle cx="961.24" cy="398.10" r="13.85" fill="#050000" stroke="#221a06" stroke-width="1.15"/>
<line x1="976.80" y1="398.30" x2="993.90" y2="398.30" stroke="#7d0a0a" stroke-width="2.7" stroke-linecap="butt"/>
<rect x="988.10" y="402.10" width="7.9" height="7.7" fill="#7f7f7f"/>
<circle cx="636.80" cy="508.40" r="4.1" fill="#0a470a"/>
<line x1="636.80" y1="508.40" x2="690.00" y2="508.40" stroke="#0a470a" stroke-width="2.7" stroke-linecap="butt"/>
<line x1="690.00" y1="508.40" x2="708.00" y2="508.40" stroke="#7d0a0a" stroke-width="2.7" stroke-linecap="butt"/>
<line x1="757.00" y1="508.40" x2="774.50" y2="508.40" stroke="#7d0a0a" stroke-width="2.7" stroke-linecap="butt"/>
<line x1="774.50" y1="508.40" x2="867.85" y2="508.40" stroke="#0a470a" stroke-width="2.7" stroke-linecap="butt"/>
<polygon points="717.68,510.26 715.06,512.88 711.34,512.88 708.72,510.26 708.72,506.54 711.34,503.92 715.06,503.92 717.68,506.54" fill="#dfdfd0" stroke="#7d0a0a" stroke-width="3.1"/><polygon points="756.88,510.26 754.26,512.88 750.54,512.88 747.92,510.26 747.92,506.54 750.54,503.92 754.26,503.92 756.88,506.54" fill="#dfdfd0" stroke="#7d0a0a" stroke-width="3.1"/><line x1="709.40" y1="496.10" x2="758.00" y2="496.10" stroke="#7d0a0a" stroke-width="2.8" stroke-linecap="butt"/><rect x="720.80" y="487.50" width="25.8" height="7.2" fill="#d6ceb6" stroke="#7d0a0a" stroke-width="2.8"/><polygon points="771.98,495.00 768.30,498.68 763.10,498.68 759.42,495.00 759.42,489.80 763.10,486.12 768.30,486.12 771.98,489.80" fill="#760808"/><path d="M766.60,489.00 q-2.0,1.4 -0.7,3.2 q1.3,1.6 -0.7,3.4" stroke="#d83030" stroke-width="1.2" fill="none"/>
<rect x="688.20" y="496.10" width="7.8" height="7.5" fill="#f24a4a"/>
<rect x="769.00" y="496.10" width="7.8" height="7.5" fill="#4343f2"/>
<text transform="translate(651.00,504.40) scale(1.0,1.04)" font-size="13.35" fill="#161616" text-anchor="start" stroke="#161616" stroke-width="0.22">KEY1</text>
<circle cx="636.80" cy="559.20" r="4.1" fill="#0a470a"/>
<line x1="636.80" y1="559.20" x2="690.00" y2="559.20" stroke="#0a470a" stroke-width="2.7" stroke-linecap="butt"/>
<line x1="690.00" y1="559.20" x2="708.00" y2="559.20" stroke="#7d0a0a" stroke-width="2.7" stroke-linecap="butt"/>
<line x1="757.00" y1="559.20" x2="774.50" y2="559.20" stroke="#7d0a0a" stroke-width="2.7" stroke-linecap="butt"/>
<line x1="774.50" y1="559.20" x2="867.85" y2="559.20" stroke="#0a470a" stroke-width="2.7" stroke-linecap="butt"/>
<polygon points="717.68,561.06 715.06,563.68 711.34,563.68 708.72,561.06 708.72,557.34 711.34,554.72 715.06,554.72 717.68,557.34" fill="#dfdfd0" stroke="#7d0a0a" stroke-width="3.1"/><polygon points="756.88,561.06 754.26,563.68 750.54,563.68 747.92,561.06 747.92,557.34 750.54,554.72 754.26,554.72 756.88,557.34" fill="#dfdfd0" stroke="#7d0a0a" stroke-width="3.1"/><line x1="709.40" y1="546.90" x2="758.00" y2="546.90" stroke="#7d0a0a" stroke-width="2.8" stroke-linecap="butt"/><rect x="720.80" y="538.30" width="25.8" height="7.2" fill="#d6ceb6" stroke="#7d0a0a" stroke-width="2.8"/><polygon points="771.98,545.80 768.30,549.48 763.10,549.48 759.42,545.80 759.42,540.60 763.10,536.92 768.30,536.92 771.98,540.60" fill="#760808"/><path d="M766.60,539.80 q-2.0,1.4 -0.7,3.2 q1.3,1.6 -0.7,3.4" stroke="#d83030" stroke-width="1.2" fill="none"/>
<rect x="688.20" y="546.90" width="7.8" height="7.5" fill="#f24a4a"/>
<rect x="769.00" y="546.90" width="7.8" height="7.5" fill="#4343f2"/>
<text transform="translate(651.00,555.20) scale(1.0,1.04)" font-size="13.35" fill="#161616" text-anchor="start" stroke="#161616" stroke-width="0.22">KEY2</text>
<circle cx="636.80" cy="617.40" r="4.1" fill="#0a470a"/>
<line x1="636.80" y1="617.40" x2="690.00" y2="617.40" stroke="#0a470a" stroke-width="2.7" stroke-linecap="butt"/>
<line x1="690.00" y1="617.40" x2="708.00" y2="617.40" stroke="#7d0a0a" stroke-width="2.7" stroke-linecap="butt"/>
<line x1="757.00" y1="617.40" x2="774.50" y2="617.40" stroke="#7d0a0a" stroke-width="2.7" stroke-linecap="butt"/>
<line x1="774.50" y1="617.40" x2="867.85" y2="617.40" stroke="#0a470a" stroke-width="2.7" stroke-linecap="butt"/>
<polygon points="717.68,619.26 715.06,621.88 711.34,621.88 708.72,619.26 708.72,615.54 711.34,612.92 715.06,612.92 717.68,615.54" fill="#dfdfd0" stroke="#7d0a0a" stroke-width="3.1"/><polygon points="756.88,619.26 754.26,621.88 750.54,621.88 747.92,619.26 747.92,615.54 750.54,612.92 754.26,612.92 756.88,615.54" fill="#dfdfd0" stroke="#7d0a0a" stroke-width="3.1"/><line x1="709.40" y1="605.10" x2="758.00" y2="605.10" stroke="#7d0a0a" stroke-width="2.8" stroke-linecap="butt"/><rect x="720.80" y="596.50" width="25.8" height="7.2" fill="#d6ceb6" stroke="#7d0a0a" stroke-width="2.8"/><polygon points="771.98,604.00 768.30,607.68 763.10,607.68 759.42,604.00 759.42,598.80 763.10,595.12 768.30,595.12 771.98,598.80" fill="#760808"/><path d="M766.60,598.00 q-2.0,1.4 -0.7,3.2 q1.3,1.6 -0.7,3.4" stroke="#d83030" stroke-width="1.2" fill="none"/>
<rect x="688.20" y="605.10" width="7.8" height="7.5" fill="#f24a4a"/>
<rect x="769.00" y="605.10" width="7.8" height="7.5" fill="#4343f2"/>
<text transform="translate(651.00,613.40) scale(1.0,1.04)" font-size="13.35" fill="#161616" text-anchor="start" stroke="#161616" stroke-width="0.22">KEY3</text>
<line x1="866.50" y1="507.05" x2="866.50" y2="653.10" stroke="#0a470a" stroke-width="2.7" stroke-linecap="butt"/>
<circle cx="866.50" cy="559.20" r="3.8" fill="#0a470a"/>
<circle cx="866.50" cy="617.40" r="3.8" fill="#0a470a"/>
<line x1="849.35" y1="653.10" x2="883.65" y2="653.10" stroke="#0a470a" stroke-width="2.7" stroke-linecap="butt"/><line x1="857.45" y1="661.30" x2="875.55" y2="661.30" stroke="#0a470a" stroke-width="2.7" stroke-linecap="butt"/><line x1="863.65" y1="669.50" x2="869.35" y2="669.50" stroke="#0a470a" stroke-width="2.7" stroke-linecap="butt"/>
<text transform="translate(873.80,506.20) scale(1.0,0.95)" font-size="26.5" fill="#7d0a0a" text-anchor="start" >启动</text>
<text transform="translate(880.40,572.20) scale(1.0,0.95)" font-size="26.5" fill="#7d0a0a" text-anchor="start" >停止</text>
<text transform="translate(880.00,621.20) scale(1.0,0.95)" font-size="26.5" fill="#7d0a0a" text-anchor="start" >模式选择</text>
<g transform="translate(0,0)"><rect x="565" y="15" width="470" height="242" rx="5" fill="#000" opacity="0.2" filter="url(#sh)"/><rect x="565.1" y="11.2" width="469.8" height="240.1" rx="4.5" fill="#acacaa"/><rect x="566.8" y="12.9" width="466.0" height="235.0" rx="3.2" fill="#ffffff"/><rect x="1002.2" y="22.1" width="29.5" height="29.3" fill="#e5e5e5"/><path d="M1014.4,34.2 L1021.0,40.8 M1021.0,34.2 L1014.4,40.8" stroke="#f1f1f1" stroke-width="1.5"/><text transform="translate(578.0,39.9) scale(1,0.93)" font-size="20" fill="#939393">Virtual Terminal</text><rect x="566.8" y="55.9" width="466" height="3.9" fill="url(#bev)"/><rect x="565.7" y="55.9" width="5.4" height="190.3" fill="#c6c6c6"/><rect x="565.7" y="55.9" width="1.6" height="192" fill="#acacac"/><rect x="571.1" y="59.8" width="431.6" height="186.2" fill="#000"/><rect x="1002.7" y="59.8" width="27.3" height="186.2" fill="#f0f0f0"/><polygon points="1011,78.3 1021.8,78.3 1016.4,70.6" fill="#9d9d9d" stroke="#9d9d9d" stroke-width="1" stroke-linejoin="round"/><polygon points="1011,229.4 1021.8,229.4 1016.4,237.1" fill="#9d9d9d" stroke="#9d9d9d" stroke-width="1" stroke-linejoin="round"/><text transform="translate(573.4,73.10) scale(1,0.8)" font-weight="normal" font-size="16.7" fill="#44e044" stroke="#44e044" stroke-width="0.25" style="white-space:pre;font-family:'Liberation Mono',monospace">LEDs&#160;Display!</text><text transform="translate(573.4,90.95) scale(1,0.8)" font-weight="normal" font-size="16.7" fill="#44e044" stroke="#44e044" stroke-width="0.25" style="white-space:pre;font-family:'Liberation Mono',monospace">Display&#160;Mode&#160;=&#160;0</text><text transform="translate(573.4,108.80) scale(1,0.8)" font-weight="normal" font-size="16.7" fill="#44e044" stroke="#44e044" stroke-width="0.25" style="white-space:pre;font-family:'Liberation Mono',monospace">Display&#160;ON!</text></g>
<line x1="758.6" y1="250.6" x2="955.5" y2="250.6" stroke="#9a3a3a" stroke-width="1.2" opacity="0.8"/>
</g>
<g clip-path="url(#cr)"><rect x="1106" y="0" width="509" height="424" fill="#dfdfd0"/>
<g fill="#b7b7a6"><rect x="1119" y="0" width="1" height="424"/><rect x="1151" y="0" width="2" height="424"/><rect x="1184" y="0" width="1" height="424"/><rect x="1217" y="0" width="1" height="424"/><rect x="1249" y="0" width="1" height="424"/><rect x="1281" y="0" width="1" height="424"/><rect x="1313" y="0" width="2" height="424"/><rect x="1346" y="0" width="1" height="424"/><rect x="1379" y="0" width="1" height="424"/><rect x="1411" y="0" width="1" height="424"/><rect x="1443" y="0" width="1" height="424"/><rect x="1475" y="0" width="2" height="424"/><rect x="1508" y="0" width="1" height="424"/><rect x="1541" y="0" width="1" height="424"/><rect x="1573" y="0" width="1" height="424"/><rect x="1605" y="0" width="1" height="424"/><rect x="1106" y="4" width="509" height="1"/><rect x="1106" y="36" width="509" height="1"/><rect x="1106" y="69" width="509" height="1"/><rect x="1106" y="101" width="509" height="1"/><rect x="1106" y="133" width="509" height="2"/><rect x="1106" y="166" width="509" height="1"/><rect x="1106" y="198" width="509" height="1"/><rect x="1106" y="231" width="509" height="1"/><rect x="1106" y="263" width="509" height="1"/><rect x="1106" y="295" width="509" height="2"/><rect x="1106" y="328" width="509" height="1"/><rect x="1106" y="360" width="509" height="1"/><rect x="1106" y="393" width="509" height="1"/></g>
<g transform="translate(563,1)">
<line x1="26.15" y1="144.20" x2="59.80" y2="144.20" stroke="#0a470a" stroke-width="2.7" stroke-linecap="butt"/>
<line x1="27.50" y1="142.85" x2="27.50" y2="227.30" stroke="#0a470a" stroke-width="2.7" stroke-linecap="butt"/>
<line x1="59.80" y1="144.20" x2="77.50" y2="144.20" stroke="#7d0a0a" stroke-width="2.7" stroke-linecap="butt"/>
<line x1="126.50" y1="144.20" x2="143.50" y2="144.20" stroke="#7d0a0a" stroke-width="2.7" stroke-linecap="butt"/>
<line x1="143.50" y1="144.20" x2="183.00" y2="144.20" stroke="#0a470a" stroke-width="2.7" stroke-linecap="butt"/>
<polygon points="171.40,74.20 163.30,88.55 179.50,88.55" fill="none" stroke="#0a470a" stroke-width="2.7" stroke-linejoin="miter"/><line x1="171.40" y1="73.60" x2="171.40" y2="195.55" stroke="#0a470a" stroke-width="2.7" stroke-linecap="butt"/>
<polygon points="86.88,146.06 84.26,148.68 80.54,148.68 77.92,146.06 77.92,142.34 80.54,139.72 84.26,139.72 86.88,142.34" fill="#dfdfd0" stroke="#7d0a0a" stroke-width="3.1"/><polygon points="126.08,146.06 123.46,148.68 119.74,148.68 117.12,146.06 117.12,142.34 119.74,139.72 123.46,139.72 126.08,142.34" fill="#dfdfd0" stroke="#7d0a0a" stroke-width="3.1"/><line x1="76.80" y1="131.90" x2="125.40" y2="131.90" stroke="#7d0a0a" stroke-width="2.8" stroke-linecap="butt"/><rect x="88.40" y="123.30" width="25.8" height="7.2" fill="#d6ceb6" stroke="#7d0a0a" stroke-width="2.8"/><polygon points="75.68,130.90 72.00,134.58 66.80,134.58 63.12,130.90 63.12,125.70 66.80,122.02 72.00,122.02 75.68,125.70" fill="#760808"/><path d="M70.30,124.90 q-2.0,1.4 -0.7,3.2 q1.3,1.6 -0.7,3.4" stroke="#d83030" stroke-width="1.2" fill="none"/>
<circle cx="171.40" cy="144.20" r="3.8" fill="#0a470a"/>
<line x1="27.50" y1="194.20" x2="66.40" y2="194.20" stroke="#0a470a" stroke-width="2.7" stroke-linecap="butt"/>
<line x1="66.40" y1="194.20" x2="95.60" y2="194.20" stroke="#7d0a0a" stroke-width="2.7" stroke-linecap="butt"/>
<line x1="104.50" y1="194.20" x2="133.50" y2="194.20" stroke="#7d0a0a" stroke-width="2.7" stroke-linecap="butt"/>
<line x1="133.50" y1="194.20" x2="172.75" y2="194.20" stroke="#0a470a" stroke-width="2.7" stroke-linecap="butt"/>
<line x1="95.60" y1="176.90" x2="95.60" y2="211.80" stroke="#7d0a0a" stroke-width="3.0" stroke-linecap="butt"/>
<line x1="104.50" y1="176.90" x2="104.50" y2="211.80" stroke="#7d0a0a" stroke-width="3.0" stroke-linecap="butt"/>
<circle cx="27.50" cy="194.20" r="3.8" fill="#0a470a"/>
<line x1="9.50" y1="227.30" x2="45.50" y2="227.30" stroke="#0a470a" stroke-width="2.7" stroke-linecap="butt"/><line x1="17.50" y1="235.45" x2="37.50" y2="235.45" stroke="#0a470a" stroke-width="2.7" stroke-linecap="butt"/><line x1="24.70" y1="243.60" x2="30.30" y2="243.60" stroke="#0a470a" stroke-width="2.7" stroke-linecap="butt"/>
<rect x="57.10" y="132.40" width="7.6" height="7.3" fill="#4343f2"/>
<rect x="138.20" y="132.40" width="7.5" height="7.3" fill="#f24a4a"/>
<rect x="63.00" y="182.00" width="8" height="8" fill="#4343f2"/>
<rect x="128.00" y="182.00" width="8" height="8" fill="#f24a4a"/>
<text transform="translate(83.30,172.60) scale(1.0,1.14)" font-size="18.5" fill="#161616" text-anchor="start" stroke="#161616" stroke-width="0.4">C1</text>
<text transform="translate(84.00,224.70) scale(1.0,1.08)" font-size="12.8" fill="#161616" text-anchor="start" stroke="#161616" stroke-width="0.22">1nF</text>
<text x="64.50" y="251.80" font-size="32" fill="#7d0a0a" text-anchor="start" >复位电路</text>
<rect x="216.6" y="128.4" width="210.8" height="550.6" fill="#c9c9a8" stroke="#7d0a0a" stroke-width="2.9"/>
<text transform="translate(215.90,121.80) scale(1.0,1.14)" font-size="18.5" fill="#161616" text-anchor="start" stroke="#161616" stroke-width="0.4">U1</text>
<text transform="translate(215.30,692.30) scale(1.0,1.06)" font-size="13.3" fill="#161616" text-anchor="start" stroke="#161616" stroke-width="0.22">STM32F103C8</text>
<text x="265.80" y="740.20" font-size="32" fill="#7d0a0a" text-anchor="start" >主控芯片</text>
<line x1="427.40" y1="144.20" x2="461.00" y2="144.20" stroke="#7d0a0a" stroke-width="2.8" stroke-linecap="butt"/>
<rect x="434.30" y="133.20" width="7" height="6" fill="#7f7f7f"/>
<text transform="translate(444.60,141.60) scale(0.92,1.08)" font-size="12.8" fill="#161616" text-anchor="start" stroke="#161616" stroke-width="0.22">10</text>
<text transform="translate(418.80,148.60) scale(1.0,1.04)" font-size="13.35" fill="#161616" text-anchor="end" stroke="#161616" stroke-width="0.22">PA0-WKUP</text>
<line x1="427.40" y1="160.40" x2="461.00" y2="160.40" stroke="#7d0a0a" stroke-width="2.8" stroke-linecap="butt"/>
<rect x="434.30" y="149.40" width="7" height="6" fill="#7f7f7f"/>
<text transform="translate(444.60,157.80) scale(0.92,1.08)" font-size="12.8" fill="#161616" text-anchor="start" stroke="#161616" stroke-width="0.22">11</text>
<text transform="translate(418.80,164.80) scale(1.0,1.04)" font-size="13.35" fill="#161616" text-anchor="end" stroke="#161616" stroke-width="0.22">PA1</text>
<line x1="427.40" y1="176.60" x2="461.00" y2="176.60" stroke="#7d0a0a" stroke-width="2.8" stroke-linecap="butt"/>
<rect x="434.30" y="165.60" width="7" height="6" fill="#7f7f7f"/>
<text transform="translate(444.60,174.00) scale(0.92,1.08)" font-size="12.8" fill="#161616" text-anchor="start" stroke="#161616" stroke-width="0.22">12</text>
<text transform="translate(418.80,181.00) scale(1.0,1.04)" font-size="13.35" fill="#161616" text-anchor="end" stroke="#161616" stroke-width="0.22">PA2</text>
<line x1="427.40" y1="192.80" x2="461.00" y2="192.80" stroke="#7d0a0a" stroke-width="2.8" stroke-linecap="butt"/>
<rect x="434.30" y="181.80" width="7" height="6" fill="#7f7f7f"/>
<text transform="translate(444.60,190.20) scale(0.92,1.08)" font-size="12.8" fill="#161616" text-anchor="start" stroke="#161616" stroke-width="0.22">13</text>
<text transform="translate(418.80,197.20) scale(1.0,1.04)" font-size="13.35" fill="#161616" text-anchor="end" stroke="#161616" stroke-width="0.22">PA3</text>
<line x1="427.40" y1="209.00" x2="461.00" y2="209.00" stroke="#7d0a0a" stroke-width="2.8" stroke-linecap="butt"/>
<rect x="434.30" y="198.00" width="7" height="6" fill="#7f7f7f"/>
<text transform="translate(444.60,206.40) scale(0.92,1.08)" font-size="12.8" fill="#161616" text-anchor="start" stroke="#161616" stroke-width="0.22">14</text>
<text transform="translate(418.80,213.40) scale(1.0,1.04)" font-size="13.35" fill="#161616" text-anchor="end" stroke="#161616" stroke-width="0.22">PA4</text>
<line x1="427.40" y1="225.20" x2="461.00" y2="225.20" stroke="#7d0a0a" stroke-width="2.8" stroke-linecap="butt"/>
<rect x="434.30" y="214.20" width="7" height="6" fill="#7f7f7f"/>
<text transform="translate(444.60,222.60) scale(0.92,1.08)" font-size="12.8" fill="#161616" text-anchor="start" stroke="#161616" stroke-width="0.22">15</text>
<text transform="translate(418.80,229.60) scale(1.0,1.04)" font-size="13.35" fill="#161616" text-anchor="end" stroke="#161616" stroke-width="0.22">PA5</text>
<line x1="427.40" y1="241.40" x2="461.00" y2="241.40" stroke="#7d0a0a" stroke-width="2.8" stroke-linecap="butt"/>
<rect x="434.30" y="230.40" width="7" height="6" fill="#7f7f7f"/>
<text transform="translate(444.60,238.80) scale(0.92,1.08)" font-size="12.8" fill="#161616" text-anchor="start" stroke="#161616" stroke-width="0.22">16</text>
<text transform="translate(418.80,245.80) scale(1.0,1.04)" font-size="13.35" fill="#161616" text-anchor="end" stroke="#161616" stroke-width="0.22">PA6</text>
<line x1="427.40" y1="257.60" x2="461.00" y2="257.60" stroke="#7d0a0a" stroke-width="2.8" stroke-linecap="butt"/>
<rect x="434.30" y="246.60" width="7" height="6" fill="#7f7f7f"/>
<text transform="translate(444.60,255.00) scale(0.92,1.08)" font-size="12.8" fill="#161616" text-anchor="start" stroke="#161616" stroke-width="0.22">17</text>
<text transform="translate(418.80,262.00) scale(1.0,1.04)" font-size="13.35" fill="#161616" text-anchor="end" stroke="#161616" stroke-width="0.22">PA7</text>
<line x1="427.40" y1="273.80" x2="461.00" y2="273.80" stroke="#7d0a0a" stroke-width="2.8" stroke-linecap="butt"/>
<rect x="434.30" y="262.80" width="7" height="6" fill="#4343f2"/>
<text transform="translate(444.60,271.20) scale(0.92,1.08)" font-size="12.8" fill="#161616" text-anchor="start" stroke="#161616" stroke-width="0.22">29</text>
<text transform="translate(418.80,278.20) scale(1.0,1.04)" font-size="13.35" fill="#161616" text-anchor="end" stroke="#161616" stroke-width="0.22">PA8</text>
<line x1="427.40" y1="290.00" x2="461.00" y2="290.00" stroke="#7d0a0a" stroke-width="2.8" stroke-linecap="butt"/>
<rect x="434.30" y="279.00" width="7" height="6" fill="#f24a4a"/>
<text transform="translate(444.60,287.40) scale(0.92,1.08)" font-size="12.8" fill="#161616" text-anchor="start" stroke="#161616" stroke-width="0.22">30</text>
<text transform="translate(418.80,294.40) scale(1.0,1.04)" font-size="13.35" fill="#161616" text-anchor="end" stroke="#161616" stroke-width="0.22">PA9</text>
<line x1="427.40" y1="306.20" x2="461.00" y2="306.20" stroke="#7d0a0a" stroke-width="2.8" stroke-linecap="butt"/>
<rect x="434.30" y="295.20" width="7" height="6" fill="#7f7f7f"/>
<text transform="translate(444.60,303.60) scale(0.92,1.08)" font-size="12.8" fill="#161616" text-anchor="start" stroke="#161616" stroke-width="0.22">31</text>
<text transform="translate(418.80,310.60) scale(1.0,1.04)" font-size="13.35" fill="#161616" text-anchor="end" stroke="#161616" stroke-width="0.22">PA10</text>
<line x1="427.40" y1="322.40" x2="461.00" y2="322.40" stroke="#7d0a0a" stroke-width="2.8" stroke-linecap="butt"/>
<rect x="434.30" y="311.40" width="7" height="6" fill="#7f7f7f"/>
<text transform="translate(444.60,319.80) scale(0.92,1.08)" font-size="12.8" fill="#161616" text-anchor="start" stroke="#161616" stroke-width="0.22">32</text>
<text transform="translate(418.80,326.80) scale(1.0,1.04)" font-size="13.35" fill="#161616" text-anchor="end" stroke="#161616" stroke-width="0.22">PA11</text>
<line x1="427.40" y1="338.60" x2="461.00" y2="338.60" stroke="#7d0a0a" stroke-width="2.8" stroke-linecap="butt"/>
<rect x="434.30" y="327.60" width="7" height="6" fill="#7f7f7f"/>
<text transform="translate(444.60,336.00) scale(0.92,1.08)" font-size="12.8" fill="#161616" text-anchor="start" stroke="#161616" stroke-width="0.22">33</text>
<text transform="translate(418.80,343.00) scale(1.0,1.04)" font-size="13.35" fill="#161616" text-anchor="end" stroke="#161616" stroke-width="0.22">PA12</text>
<line x1="427.40" y1="354.80" x2="461.00" y2="354.80" stroke="#7d0a0a" stroke-width="2.8" stroke-linecap="butt"/>
<rect x="434.30" y="343.80" width="7" height="6" fill="#7f7f7f"/>
<text transform="translate(444.60,352.20) scale(0.92,1.08)" font-size="12.8" fill="#161616" text-anchor="start" stroke="#161616" stroke-width="0.22">34</text>
<text transform="translate(418.80,359.20) scale(1.0,1.04)" font-size="13.35" fill="#161616" text-anchor="end" stroke="#161616" stroke-width="0.22">PA13</text>
<line x1="427.40" y1="371.00" x2="461.00" y2="371.00" stroke="#7d0a0a" stroke-width="2.8" stroke-linecap="butt"/>
<rect x="434.30" y="360.00" width="7" height="6" fill="#7f7f7f"/>
<text transform="translate(444.60,368.40) scale(0.92,1.08)" font-size="12.8" fill="#161616" text-anchor="start" stroke="#161616" stroke-width="0.22">37</text>
<text transform="translate(418.80,375.40) scale(1.0,1.04)" font-size="13.35" fill="#161616" text-anchor="end" stroke="#161616" stroke-width="0.22">PA14</text>
<line x1="427.40" y1="387.20" x2="461.00" y2="387.20" stroke="#7d0a0a" stroke-width="2.8" stroke-linecap="butt"/>
<rect x="434.30" y="376.20" width="7" height="6" fill="#7f7f7f"/>
<text transform="translate(444.60,384.60) scale(0.92,1.08)" font-size="12.8" fill="#161616" text-anchor="start" stroke="#161616" stroke-width="0.22">38</text>
<text transform="translate(418.80,391.60) scale(1.0,1.04)" font-size="13.35" fill="#161616" text-anchor="end" stroke="#161616" stroke-width="0.22">PA15</text>
<line x1="427.40" y1="419.60" x2="461.00" y2="419.60" stroke="#7d0a0a" stroke-width="2.8" stroke-linecap="butt"/>
<rect x="434.30" y="408.60" width="7" height="6" fill="#f24a4a"/>
<text transform="translate(444.60,417.00) scale(0.92,1.08)" font-size="12.8" fill="#161616" text-anchor="start" stroke="#161616" stroke-width="0.22">18</text>
<text transform="translate(418.80,424.00) scale(1.0,1.04)" font-size="13.35" fill="#161616" text-anchor="end" stroke="#161616" stroke-width="0.22">PB0</text>
<line x1="427.40" y1="435.80" x2="461.00" y2="435.80" stroke="#7d0a0a" stroke-width="2.8" stroke-linecap="butt"/>
<rect x="434.30" y="424.80" width="7" height="6" fill="#f24a4a"/>
<text transform="translate(444.60,433.20) scale(0.92,1.08)" font-size="12.8" fill="#161616" text-anchor="start" stroke="#161616" stroke-width="0.22">19</text>
<text transform="translate(418.80,440.20) scale(1.0,1.04)" font-size="13.35" fill="#161616" text-anchor="end" stroke="#161616" stroke-width="0.22">PB1</text>
<line x1="427.40" y1="452.00" x2="461.00" y2="452.00" stroke="#7d0a0a" stroke-width="2.8" stroke-linecap="butt"/>
<rect x="434.30" y="441.00" width="7" height="6" fill="#f24a4a"/>
<text transform="translate(444.60,449.40) scale(0.92,1.08)" font-size="12.8" fill="#161616" text-anchor="start" stroke="#161616" stroke-width="0.22">20</text>
<text transform="translate(418.80,456.40) scale(1.0,1.04)" font-size="13.35" fill="#161616" text-anchor="end" stroke="#161616" stroke-width="0.22">PB2</text>
<line x1="427.40" y1="468.20" x2="461.00" y2="468.20" stroke="#7d0a0a" stroke-width="2.8" stroke-linecap="butt"/>
<rect x="434.30" y="457.20" width="7" height="6" fill="#7f7f7f"/>
<text transform="translate(444.60,465.60) scale(0.92,1.08)" font-size="12.8" fill="#161616" text-anchor="start" stroke="#161616" stroke-width="0.22">39</text>
<text transform="translate(418.80,472.60) scale(1.0,1.04)" font-size="13.35" fill="#161616" text-anchor="end" stroke="#161616" stroke-width="0.22">PB3</text>
<line x1="427.40" y1="484.40" x2="461.00" y2="484.40" stroke="#7d0a0a" stroke-width="2.8" stroke-linecap="butt"/>
<rect x="434.30" y="473.40" width="7" height="6" fill="#7f7f7f"/>
<text transform="translate(444.60,481.80) scale(0.92,1.08)" font-size="12.8" fill="#161616" text-anchor="start" stroke="#161616" stroke-width="0.22">40</text>
<text transform="translate(418.80,488.80) scale(1.0,1.04)" font-size="13.35" fill="#161616" text-anchor="end" stroke="#161616" stroke-width="0.22">PB4</text>
<line x1="427.40" y1="500.60" x2="461.00" y2="500.60" stroke="#7d0a0a" stroke-width="2.8" stroke-linecap="butt"/>
<rect x="434.30" y="489.60" width="7" height="6" fill="#7f7f7f"/>
<text transform="translate(444.60,498.00) scale(0.92,1.08)" font-size="12.8" fill="#161616" text-anchor="start" stroke="#161616" stroke-width="0.22">41</text>
<text transform="translate(418.80,505.00) scale(1.0,1.04)" font-size="13.35" fill="#161616" text-anchor="end" stroke="#161616" stroke-width="0.22">PB5</text>
<line x1="427.40" y1="516.80" x2="461.00" y2="516.80" stroke="#7d0a0a" stroke-width="2.8" stroke-linecap="butt"/>
<rect x="434.30" y="505.80" width="7" height="6" fill="#7f7f7f"/>
<text transform="translate(444.60,514.20) scale(0.92,1.08)" font-size="12.8" fill="#161616" text-anchor="start" stroke="#161616" stroke-width="0.22">42</text>
<text transform="translate(418.80,521.20) scale(1.0,1.04)" font-size="13.35" fill="#161616" text-anchor="end" stroke="#161616" stroke-width="0.22">PB6</text>
<line x1="427.40" y1="533.00" x2="461.00" y2="533.00" stroke="#7d0a0a" stroke-width="2.8" stroke-linecap="butt"/>
<rect x="434.30" y="522.00" width="7" height="6" fill="#7f7f7f"/>
<text transform="translate(444.60,530.40) scale(0.92,1.08)" font-size="12.8" fill="#161616" text-anchor="start" stroke="#161616" stroke-width="0.22">43</text>
<text transform="translate(418.80,537.40) scale(1.0,1.04)" font-size="13.35" fill="#161616" text-anchor="end" stroke="#161616" stroke-width="0.22">PB7</text>
<line x1="427.40" y1="549.20" x2="461.00" y2="549.20" stroke="#7d0a0a" stroke-width="2.8" stroke-linecap="butt"/>
<rect x="434.30" y="538.20" width="7" height="6" fill="#4343f2"/>
<text transform="translate(444.60,546.60) scale(0.92,1.08)" font-size="12.8" fill="#161616" text-anchor="start" stroke="#161616" stroke-width="0.22">45</text>
<text transform="translate(418.80,553.60) scale(1.0,1.04)" font-size="13.35" fill="#161616" text-anchor="end" stroke="#161616" stroke-width="0.22">PB8</text>
<line x1="427.40" y1="565.40" x2="461.00" y2="565.40" stroke="#7d0a0a" stroke-width="2.8" stroke-linecap="butt"/>
<rect x="434.30" y="554.40" width="7" height="6" fill="#4343f2"/>
<text transform="translate(444.60,562.80) scale(0.92,1.08)" font-size="12.8" fill="#161616" text-anchor="start" stroke="#161616" stroke-width="0.22">46</text>
<text transform="translate(418.80,569.80) scale(1.0,1.04)" font-size="13.35" fill="#161616" text-anchor="end" stroke="#161616" stroke-width="0.22">PB9</text>
<line x1="427.40" y1="581.60" x2="461.00" y2="581.60" stroke="#7d0a0a" stroke-width="2.8" stroke-linecap="butt"/>
<rect x="434.30" y="570.60" width="7" height="6" fill="#7f7f7f"/>
<text transform="translate(444.60,579.00) scale(0.92,1.08)" font-size="12.8" fill="#161616" text-anchor="start" stroke="#161616" stroke-width="0.22">21</text>
<text transform="translate(418.80,586.00) scale(1.0,1.04)" font-size="13.35" fill="#161616" text-anchor="end" stroke="#161616" stroke-width="0.22">PB10</text>
<line x1="427.40" y1="597.80" x2="461.00" y2="597.80" stroke="#7d0a0a" stroke-width="2.8" stroke-linecap="butt"/>
<rect x="434.30" y="586.80" width="7" height="6" fill="#7f7f7f"/>
<text transform="translate(444.60,595.20) scale(0.92,1.08)" font-size="12.8" fill="#161616" text-anchor="start" stroke="#161616" stroke-width="0.22">22</text>
<text transform="translate(418.80,602.20) scale(1.0,1.04)" font-size="13.35" fill="#161616" text-anchor="end" stroke="#161616" stroke-width="0.22">PB11</text>
<line x1="427.40" y1="614.00" x2="461.00" y2="614.00" stroke="#7d0a0a" stroke-width="2.8" stroke-linecap="butt"/>
<rect x="434.30" y="603.00" width="7" height="6" fill="#7f7f7f"/>
<text transform="translate(444.60,611.40) scale(0.92,1.08)" font-size="12.8" fill="#161616" text-anchor="start" stroke="#161616" stroke-width="0.22">25</text>
<text transform="translate(418.80,618.40) scale(1.0,1.04)" font-size="13.35" fill="#161616" text-anchor="end" stroke="#161616" stroke-width="0.22">PB12</text>
<line x1="427.40" y1="630.20" x2="461.00" y2="630.20" stroke="#7d0a0a" stroke-width="2.8" stroke-linecap="butt"/>
<rect x="434.30" y="619.20" width="7" height="6" fill="#7f7f7f"/>
<text transform="translate(444.60,627.60) scale(0.92,1.08)" font-size="12.8" fill="#161616" text-anchor="start" stroke="#161616" stroke-width="0.22">26</text>
<text transform="translate(418.80,634.60) scale(1.0,1.04)" font-size="13.35" fill="#161616" text-anchor="end" stroke="#161616" stroke-width="0.22">PB13</text>
<line x1="427.40" y1="646.40" x2="461.00" y2="646.40" stroke="#7d0a0a" stroke-width="2.8" stroke-linecap="butt"/>
<rect x="434.30" y="635.40" width="7" height="6" fill="#7f7f7f"/>
<text transform="translate(444.60,643.80) scale(0.92,1.08)" font-size="12.8" fill="#161616" text-anchor="start" stroke="#161616" stroke-width="0.22">27</text>
<text transform="translate(418.80,650.80) scale(1.0,1.04)" font-size="13.35" fill="#161616" text-anchor="end" stroke="#161616" stroke-width="0.22">PB14</text>
<line x1="427.40" y1="662.60" x2="461.00" y2="662.60" stroke="#7d0a0a" stroke-width="2.8" stroke-linecap="butt"/>
<rect x="434.30" y="651.60" width="7" height="6" fill="#7f7f7f"/>
<text transform="translate(444.60,660.00) scale(0.92,1.08)" font-size="12.8" fill="#161616" text-anchor="start" stroke="#161616" stroke-width="0.22">28</text>
<text transform="translate(418.80,667.00) scale(1.0,1.04)" font-size="13.35" fill="#161616" text-anchor="end" stroke="#161616" stroke-width="0.22">PB15</text>
<line x1="183.00" y1="144.20" x2="216.60" y2="144.20" stroke="#7d0a0a" stroke-width="2.8" stroke-linecap="butt"/>
<rect x="202.20" y="133.20" width="7" height="6" fill="#f24a4a"/>
<text transform="translate(200.40,141.60) scale(0.92,1.08)" font-size="12.8" fill="#161616" text-anchor="end" stroke="#161616" stroke-width="0.22">7</text>
<text transform="translate(224.60,148.60) scale(1.0,1.04)" font-size="13.35" fill="#161616" text-anchor="start" stroke="#161616" stroke-width="0.22">NRST</text>
<line x1="183.00" y1="387.20" x2="216.60" y2="387.20" stroke="#7d0a0a" stroke-width="2.8" stroke-linecap="butt"/>
<rect x="202.20" y="376.20" width="7" height="6" fill="#4343f2"/>
<text transform="translate(200.40,384.60) scale(0.92,1.08)" font-size="12.8" fill="#161616" text-anchor="end" stroke="#161616" stroke-width="0.22">2</text>
<text transform="translate(224.60,391.60) scale(1.0,1.04)" font-size="13.35" fill="#161616" text-anchor="start" stroke="#161616" stroke-width="0.22">PC13_RTC</text>
<line x1="183.00" y1="403.40" x2="216.60" y2="403.40" stroke="#7d0a0a" stroke-width="2.8" stroke-linecap="butt"/>
<rect x="202.20" y="392.40" width="7" height="6" fill="#7f7f7f"/>
<text transform="translate(200.40,400.80) scale(0.92,1.08)" font-size="12.8" fill="#161616" text-anchor="end" stroke="#161616" stroke-width="0.22">3</text>
<text transform="translate(224.60,407.80) scale(1.0,1.04)" font-size="13.35" fill="#161616" text-anchor="start" stroke="#161616" stroke-width="0.22">PC14-OSC32_IN</text>
<line x1="183.00" y1="419.60" x2="216.60" y2="419.60" stroke="#7d0a0a" stroke-width="2.8" stroke-linecap="butt"/>
<rect x="202.20" y="408.60" width="7" height="6" fill="#7f7f7f"/>
<text transform="translate(200.40,417.00) scale(0.92,1.08)" font-size="12.8" fill="#161616" text-anchor="end" stroke="#161616" stroke-width="0.22">4</text>
<text transform="translate(224.60,424.00) scale(1.0,1.04)" font-size="13.35" fill="#161616" text-anchor="start" stroke="#161616" stroke-width="0.22">PC15-OSC32_OUT</text>
<line x1="183.00" y1="468.20" x2="216.60" y2="468.20" stroke="#7d0a0a" stroke-width="2.8" stroke-linecap="butt"/>
<rect x="202.20" y="457.20" width="7" height="6" fill="#4343f2"/>
<text transform="translate(200.40,465.60) scale(0.92,1.08)" font-size="12.8" fill="#161616" text-anchor="end" stroke="#161616" stroke-width="0.22">5</text>
<text transform="translate(224.60,472.60) scale(1.0,1.04)" font-size="13.35" fill="#161616" text-anchor="start" stroke="#161616" stroke-width="0.22">OSCIN_PD0</text>
<line x1="183.00" y1="484.40" x2="216.60" y2="484.40" stroke="#7d0a0a" stroke-width="2.8" stroke-linecap="butt"/>
<rect x="202.20" y="473.40" width="7" height="6" fill="#4343f2"/>
<text transform="translate(200.40,481.80) scale(0.92,1.08)" font-size="12.8" fill="#161616" text-anchor="end" stroke="#161616" stroke-width="0.22">6</text>
<text transform="translate(224.60,488.80) scale(1.0,1.04)" font-size="13.35" fill="#161616" text-anchor="start" stroke="#161616" stroke-width="0.22">OSCOUT_PD1</text>
<line x1="183.00" y1="533.00" x2="216.60" y2="533.00" stroke="#7d0a0a" stroke-width="2.8" stroke-linecap="butt"/>
<rect x="202.20" y="522.00" width="7" height="6" fill="#f24a4a"/>
<text transform="translate(200.40,530.40) scale(0.92,1.08)" font-size="12.8" fill="#161616" text-anchor="end" stroke="#161616" stroke-width="0.22">9</text>
<text transform="translate(224.60,537.40) scale(1.0,1.04)" font-size="13.35" fill="#161616" text-anchor="start" stroke="#161616" stroke-width="0.22">VDDA</text>
<line x1="183.00" y1="549.20" x2="216.60" y2="549.20" stroke="#7d0a0a" stroke-width="2.8" stroke-linecap="butt"/>
<rect x="202.20" y="538.20" width="7" height="6" fill="#4343f2"/>
<text transform="translate(200.40,546.60) scale(0.92,1.08)" font-size="12.8" fill="#161616" text-anchor="end" stroke="#161616" stroke-width="0.22">8</text>
<text transform="translate(224.60,553.60) scale(1.0,1.04)" font-size="13.35" fill="#161616" text-anchor="start" stroke="#161616" stroke-width="0.22">VSSA</text>
<line x1="183.00" y1="597.80" x2="216.60" y2="597.80" stroke="#7d0a0a" stroke-width="2.8" stroke-linecap="butt"/>
<rect x="202.20" y="586.80" width="7" height="6" fill="#f24a4a"/>
<text transform="translate(200.40,595.20) scale(0.92,1.08)" font-size="12.8" fill="#161616" text-anchor="end" stroke="#161616" stroke-width="0.22">1</text>
<text transform="translate(224.60,602.20) scale(1.0,1.04)" font-size="13.35" fill="#161616" text-anchor="start" stroke="#161616" stroke-width="0.22">VBAT</text>
<line x1="183.00" y1="662.60" x2="216.60" y2="662.60" stroke="#7d0a0a" stroke-width="2.8" stroke-linecap="butt"/>
<rect x="202.20" y="651.60" width="7" height="6" fill="#f24a4a"/>
<text transform="translate(200.40,660.00) scale(0.92,1.08)" font-size="12.8" fill="#161616" text-anchor="end" stroke="#161616" stroke-width="0.22">44</text>
<text transform="translate(224.60,667.00) scale(1.0,1.04)" font-size="13.35" fill="#161616" text-anchor="start" stroke="#161616" stroke-width="0.22">BOOT0</text>
<polygon points="117.20,480.10 109.10,494.75 125.30,494.75" fill="none" stroke="#0a470a" stroke-width="2.7" stroke-linejoin="miter"/><line x1="117.20" y1="479.50" x2="117.20" y2="534.35" stroke="#0a470a" stroke-width="2.7" stroke-linecap="butt"/>
<line x1="115.85" y1="533.00" x2="183.00" y2="533.00" stroke="#0a470a" stroke-width="2.7" stroke-linecap="butt"/>
<line x1="183.00" y1="549.20" x2="115.85" y2="549.20" stroke="#0a470a" stroke-width="2.7" stroke-linecap="butt"/>
<line x1="117.20" y1="547.85" x2="117.20" y2="604.00" stroke="#0a470a" stroke-width="2.7" stroke-linecap="butt"/>
<line x1="99.70" y1="604.00" x2="134.70" y2="604.00" stroke="#0a470a" stroke-width="2.7" stroke-linecap="butt"/><line x1="107.95" y1="612.35" x2="126.45" y2="612.35" stroke="#0a470a" stroke-width="2.7" stroke-linecap="butt"/><line x1="114.40" y1="620.70" x2="120.00" y2="620.70" stroke="#0a470a" stroke-width="2.7" stroke-linecap="butt"/>
<text transform="translate(493.00,285.40) scale(1.0,1.04)" font-size="13.35" fill="#161616" text-anchor="start" stroke="#161616" stroke-width="0.22">PA9</text>
<line x1="461.00" y1="290.00" x2="535.50" y2="290.00" stroke="#0a470a" stroke-width="2.7" stroke-linecap="butt"/>
<circle cx="535.50" cy="290.00" r="4.0" fill="#0a470a"/>
<text transform="translate(475.30,416.10) scale(1.0,1.04)" font-size="13.35" fill="#161616" text-anchor="start" stroke="#161616" stroke-width="0.22">KEY1</text>
<line x1="461.00" y1="419.60" x2="526.60" y2="419.60" stroke="#0a470a" stroke-width="2.7" stroke-linecap="butt"/>
<circle cx="526.60" cy="419.60" r="3.8" fill="#0a470a"/>
<text transform="translate(475.30,432.30) scale(1.0,1.04)" font-size="13.35" fill="#161616" text-anchor="start" stroke="#161616" stroke-width="0.22">KEY2</text>
<line x1="461.00" y1="435.80" x2="526.60" y2="435.80" stroke="#0a470a" stroke-width="2.7" stroke-linecap="butt"/>
<circle cx="526.60" cy="435.80" r="3.8" fill="#0a470a"/>
<text transform="translate(475.30,448.50) scale(1.0,1.04)" font-size="13.35" fill="#161616" text-anchor="start" stroke="#161616" stroke-width="0.22">KEY3</text>
<line x1="461.00" y1="452.00" x2="526.60" y2="452.00" stroke="#0a470a" stroke-width="2.7" stroke-linecap="butt"/>
<circle cx="526.60" cy="452.00" r="3.8" fill="#0a470a"/>
<text transform="translate(488.00,545.60) scale(1.0,1.04)" font-size="13.35" fill="#161616" text-anchor="start" stroke="#161616" stroke-width="0.22">WS2812_1</text>
<line x1="461.00" y1="549.20" x2="566.60" y2="549.20" stroke="#0a470a" stroke-width="2.7" stroke-linecap="butt"/>
<circle cx="566.60" cy="549.20" r="3.9" fill="#0a470a"/>
<text transform="translate(488.00,561.80) scale(1.0,1.04)" font-size="13.35" fill="#161616" text-anchor="start" stroke="#161616" stroke-width="0.22">WS2812_2</text>
<line x1="461.00" y1="565.40" x2="566.60" y2="565.40" stroke="#0a470a" stroke-width="2.7" stroke-linecap="butt"/>
<circle cx="566.60" cy="565.40" r="3.9" fill="#0a470a"/>
<polygon points="587.3,450.9 591.5,450.9 596,455.3 596,459.5 591.5,463.8 587.3,463.8 583.3,459.5 583.3,455.3" fill="#dcdcf6" stroke="#12127a" stroke-width="1.25"/>
<line x1="589.40" y1="449.00" x2="589.40" y2="465.80" stroke="#12127a" stroke-width="1.35" stroke-linecap="butt"/>
<line x1="581.00" y1="457.40" x2="598.00" y2="457.40" stroke="#12127a" stroke-width="1.35" stroke-linecap="butt"/>
<text transform="translate(621.00,329.10) scale(1.0,1.04)" font-size="13.35" fill="#161616" text-anchor="start" stroke="#161616" stroke-width="0.22">WS2812_1</text>
<line x1="605.10" y1="332.40" x2="700.00" y2="332.40" stroke="#0a470a" stroke-width="2.7" stroke-linecap="butt"/>
<line x1="700.00" y1="332.40" x2="717.60" y2="332.40" stroke="#7d0a0a" stroke-width="2.7" stroke-linecap="butt"/>
<circle cx="605.10" cy="332.40" r="4.2" fill="#0a470a"/>
<rect x="696.10" y="320.00" width="8.5" height="7.7" fill="#4343f2"/>
<text transform="translate(716.20,309.90) scale(1.0,1.08)" font-size="19.4" fill="#161616" text-anchor="start" stroke="#161616" stroke-width="0.4">LED2</text>
<rect x="716.2" y="315.30" width="262" height="34" fill="#7d0a0a" />
<rect x="718.50" y="318.05" width="29.5" height="28.6" fill="#dacdb4"/>
<circle cx="733.25" cy="332.20" r="13.85" fill="#3010a8" stroke="#221a06" stroke-width="1.15"/>
<rect x="751.07" y="318.05" width="29.5" height="28.6" fill="#dacdb4"/>
<circle cx="765.82" cy="332.20" r="13.85" fill="#7020c0" stroke="#221a06" stroke-width="1.15"/>
<rect x="783.64" y="318.05" width="29.5" height="28.6" fill="#dacdb4"/>
<circle cx="798.39" cy="332.20" r="13.85" fill="#c020e0" stroke="#221a06" stroke-width="1.15"/>
<rect x="816.21" y="318.05" width="29.5" height="28.6" fill="#dacdb4"/>
<circle cx="830.96" cy="332.20" r="13.85" fill="#f020d0" stroke="#221a06" stroke-width="1.15"/>
<rect x="848.78" y="318.05" width="29.5" height="28.6" fill="#dacdb4"/>
<circle cx="863.53" cy="332.20" r="13.85" fill="#e01880" stroke="#221a06" stroke-width="1.15"/>
<rect x="881.35" y="318.05" width="29.5" height="28.6" fill="#dacdb4"/>
<circle cx="896.10" cy="332.20" r="13.85" fill="#c80820" stroke="#221a06" stroke-width="1.15"/>
<rect x="913.92" y="318.05" width="29.5" height="28.6" fill="#dacdb4"/>
<circle cx="928.67" cy="332.20" r="13.85" fill="#a03008" stroke="#221a06" stroke-width="1.15"/>
<rect x="946.49" y="318.05" width="29.5" height="28.6" fill="#dacdb4"/>
<circle cx="961.24" cy="332.20" r="13.85" fill="#050000" stroke="#221a06" stroke-width="1.15"/>
<line x1="976.80" y1="332.40" x2="993.90" y2="332.40" stroke="#7d0a0a" stroke-width="2.7" stroke-linecap="butt"/>
<rect x="988.10" y="336.20" width="7.9" height="7.7" fill="#4343f2"/>
<text transform="translate(621.00,395.00) scale(1.0,1.04)" font-size="13.35" fill="#161616" text-anchor="start" stroke="#161616" stroke-width="0.22">WS2812_2</text>
<line x1="606.90" y1="398.30" x2="700.00" y2="398.30" stroke="#0a470a" stroke-width="2.7" stroke-linecap="butt"/>
<line x1="700.00" y1="398.30" x2="717.60" y2="398.30" stroke="#7d0a0a" stroke-width="2.7" stroke-linecap="butt"/>
<circle cx="606.90" cy="398.30" r="4.2" fill="#0a470a"/>
<rect x="696.10" y="385.90" width="8.5" height="7.7" fill="#4343f2"/>
<text transform="translate(716.20,375.80) scale(1.0,1.08)" font-size="19.4" fill="#161616" text-anchor="start" stroke="#161616" stroke-width="0.4">LED1</text>
<rect x="716.2" y="381.20" width="262" height="34" fill="#7d0a0a" />
<rect x="718.50" y="383.95" width="29.5" height="28.6" fill="#dacdb4"/>
<circle cx="733.25" cy="398.10" r="13.85" fill="#050000" stroke="#221a06" stroke-width="1.15"/>
<rect x="751.07" y="383.95" width="29.5" height="28.6" fill="#dacdb4"/>
<circle cx="765.82" cy="398.10" r="13.85" fill="#050000" stroke="#221a06" stroke-width="1.15"/>
<rect x="783.64" y="383.95" width="29.5" height="28.6" fill="#dacdb4"/>
<circle cx="798.39" cy="398.10" r="13.85" fill="#050000" stroke="#221a06" stroke-width="1.15"/>
<rect x="816.21" y="383.95" width="29.5" height="28.6" fill="#dacdb4"/>
<circle cx="830.96" cy="398.10" r="13.85" fill="#050000" stroke="#221a06" stroke-width="1.15"/>
<rect x="848.78" y="383.95" width="29.5" height="28.6" fill="#dacdb4"/>
<circle cx="863.53" cy="398.10" r="13.85" fill="#050000" stroke="#221a06" stroke-width="1.15"/>
<rect x="881.35" y="383.95" width="29.5" height="28.6" fill="#dacdb4"/>
<circle cx="896.10" cy="398.10" r="13.85" fill="#050000" stroke="#221a06" stroke-width="1.15"/>
<rect x="913.92" y="383.95" width="29.5" height="28.6" fill="#dacdb4"/>
<circle cx="928.67" cy="398.10" r="13.85" fill="#050000" stroke="#221a06" stroke-width="1.15"/>
<rect x="946.49" y="383.95" width="29.5" height="28.6" fill="#dacdb4"/>
<circle cx="961.24" cy="398.10" r="13.85" fill="#050000" stroke="#221a06" stroke-width="1.15"/>
<line x1="976.80" y1="398.30" x2="993.90" y2="398.30" stroke="#7d0a0a" stroke-width="2.7" stroke-linecap="butt"/>
<rect x="988.10" y="402.10" width="7.9" height="7.7" fill="#7f7f7f"/>
<circle cx="636.80" cy="508.40" r="4.1" fill="#0a470a"/>
<line x1="636.80" y1="508.40" x2="690.00" y2="508.40" stroke="#0a470a" stroke-width="2.7" stroke-linecap="butt"/>
<line x1="690.00" y1="508.40" x2="708.00" y2="508.40" stroke="#7d0a0a" stroke-width="2.7" stroke-linecap="butt"/>
<line x1="757.00" y1="508.40" x2="774.50" y2="508.40" stroke="#7d0a0a" stroke-width="2.7" stroke-linecap="butt"/>
<line x1="774.50" y1="508.40" x2="867.85" y2="508.40" stroke="#0a470a" stroke-width="2.7" stroke-linecap="butt"/>
<polygon points="717.68,510.26 715.06,512.88 711.34,512.88 708.72,510.26 708.72,506.54 711.34,503.92 715.06,503.92 717.68,506.54" fill="#dfdfd0" stroke="#7d0a0a" stroke-width="3.1"/><polygon points="756.88,510.26 754.26,512.88 750.54,512.88 747.92,510.26 747.92,506.54 750.54,503.92 754.26,503.92 756.88,506.54" fill="#dfdfd0" stroke="#7d0a0a" stroke-width="3.1"/><line x1="709.40" y1="496.10" x2="758.00" y2="496.10" stroke="#7d0a0a" stroke-width="2.8" stroke-linecap="butt"/><rect x="720.80" y="487.50" width="25.8" height="7.2" fill="#d6ceb6" stroke="#7d0a0a" stroke-width="2.8"/><polygon points="771.98,495.00 768.30,498.68 763.10,498.68 759.42,495.00 759.42,489.80 763.10,486.12 768.30,486.12 771.98,489.80" fill="#760808"/><path d="M766.60,489.00 q-2.0,1.4 -0.7,3.2 q1.3,1.6 -0.7,3.4" stroke="#d83030" stroke-width="1.2" fill="none"/>
<rect x="688.20" y="496.10" width="7.8" height="7.5" fill="#f24a4a"/>
<rect x="769.00" y="496.10" width="7.8" height="7.5" fill="#4343f2"/>
<text transform="translate(651.00,504.40) scale(1.0,1.04)" font-size="13.35" fill="#161616" text-anchor="start" stroke="#161616" stroke-width="0.22">KEY1</text>
<circle cx="636.80" cy="559.20" r="4.1" fill="#0a470a"/>
<line x1="636.80" y1="559.20" x2="690.00" y2="559.20" stroke="#0a470a" stroke-width="2.7" stroke-linecap="butt"/>
<line x1="690.00" y1="559.20" x2="708.00" y2="559.20" stroke="#7d0a0a" stroke-width="2.7" stroke-linecap="butt"/>
<line x1="757.00" y1="559.20" x2="774.50" y2="559.20" stroke="#7d0a0a" stroke-width="2.7" stroke-linecap="butt"/>
<line x1="774.50" y1="559.20" x2="867.85" y2="559.20" stroke="#0a470a" stroke-width="2.7" stroke-linecap="butt"/>
<polygon points="717.68,561.06 715.06,563.68 711.34,563.68 708.72,561.06 708.72,557.34 711.34,554.72 715.06,554.72 717.68,557.34" fill="#dfdfd0" stroke="#7d0a0a" stroke-width="3.1"/><polygon points="756.88,561.06 754.26,563.68 750.54,563.68 747.92,561.06 747.92,557.34 750.54,554.72 754.26,554.72 756.88,557.34" fill="#dfdfd0" stroke="#7d0a0a" stroke-width="3.1"/><line x1="709.40" y1="546.90" x2="758.00" y2="546.90" stroke="#7d0a0a" stroke-width="2.8" stroke-linecap="butt"/><rect x="720.80" y="538.30" width="25.8" height="7.2" fill="#d6ceb6" stroke="#7d0a0a" stroke-width="2.8"/><polygon points="771.98,545.80 768.30,549.48 763.10,549.48 759.42,545.80 759.42,540.60 763.10,536.92 768.30,536.92 771.98,540.60" fill="#760808"/><path d="M766.60,539.80 q-2.0,1.4 -0.7,3.2 q1.3,1.6 -0.7,3.4" stroke="#d83030" stroke-width="1.2" fill="none"/>
<rect x="688.20" y="546.90" width="7.8" height="7.5" fill="#f24a4a"/>
<rect x="769.00" y="546.90" width="7.8" height="7.5" fill="#4343f2"/>
<text transform="translate(651.00,555.20) scale(1.0,1.04)" font-size="13.35" fill="#161616" text-anchor="start" stroke="#161616" stroke-width="0.22">KEY2</text>
<circle cx="636.80" cy="617.40" r="4.1" fill="#0a470a"/>
<line x1="636.80" y1="617.40" x2="690.00" y2="617.40" stroke="#0a470a" stroke-width="2.7" stroke-linecap="butt"/>
<line x1="690.00" y1="617.40" x2="708.00" y2="617.40" stroke="#7d0a0a" stroke-width="2.7" stroke-linecap="butt"/>
<line x1="757.00" y1="617.40" x2="774.50" y2="617.40" stroke="#7d0a0a" stroke-width="2.7" stroke-linecap="butt"/>
<line x1="774.50" y1="617.40" x2="867.85" y2="617.40" stroke="#0a470a" stroke-width="2.7" stroke-linecap="butt"/>
<polygon points="717.68,619.26 715.06,621.88 711.34,621.88 708.72,619.26 708.72,615.54 711.34,612.92 715.06,612.92 717.68,615.54" fill="#dfdfd0" stroke="#7d0a0a" stroke-width="3.1"/><polygon points="756.88,619.26 754.26,621.88 750.54,621.88 747.92,619.26 747.92,615.54 750.54,612.92 754.26,612.92 756.88,615.54" fill="#dfdfd0" stroke="#7d0a0a" stroke-width="3.1"/><line x1="709.40" y1="605.10" x2="758.00" y2="605.10" stroke="#7d0a0a" stroke-width="2.8" stroke-linecap="butt"/><rect x="720.80" y="596.50" width="25.8" height="7.2" fill="#d6ceb6" stroke="#7d0a0a" stroke-width="2.8"/><polygon points="771.98,604.00 768.30,607.68 763.10,607.68 759.42,604.00 759.42,598.80 763.10,595.12 768.30,595.12 771.98,598.80" fill="#760808"/><path d="M766.60,598.00 q-2.0,1.4 -0.7,3.2 q1.3,1.6 -0.7,3.4" stroke="#d83030" stroke-width="1.2" fill="none"/>
<rect x="688.20" y="605.10" width="7.8" height="7.5" fill="#f24a4a"/>
<rect x="769.00" y="605.10" width="7.8" height="7.5" fill="#4343f2"/>
<text transform="translate(651.00,613.40) scale(1.0,1.04)" font-size="13.35" fill="#161616" text-anchor="start" stroke="#161616" stroke-width="0.22">KEY3</text>
<line x1="866.50" y1="507.05" x2="866.50" y2="653.10" stroke="#0a470a" stroke-width="2.7" stroke-linecap="butt"/>
<circle cx="866.50" cy="559.20" r="3.8" fill="#0a470a"/>
<circle cx="866.50" cy="617.40" r="3.8" fill="#0a470a"/>
<line x1="849.35" y1="653.10" x2="883.65" y2="653.10" stroke="#0a470a" stroke-width="2.7" stroke-linecap="butt"/><line x1="857.45" y1="661.30" x2="875.55" y2="661.30" stroke="#0a470a" stroke-width="2.7" stroke-linecap="butt"/><line x1="863.65" y1="669.50" x2="869.35" y2="669.50" stroke="#0a470a" stroke-width="2.7" stroke-linecap="butt"/>
<text transform="translate(873.80,506.20) scale(1.0,0.95)" font-size="26.5" fill="#7d0a0a" text-anchor="start" >启动</text>
<text transform="translate(880.40,572.20) scale(1.0,0.95)" font-size="26.5" fill="#7d0a0a" text-anchor="start" >停止</text>
<text transform="translate(880.00,621.20) scale(1.0,0.95)" font-size="26.5" fill="#7d0a0a" text-anchor="start" >模式选择</text>
<g transform="translate(0,0)"><rect x="565" y="15" width="470" height="242" rx="5" fill="#000" opacity="0.2" filter="url(#sh)"/><rect x="565.1" y="11.2" width="469.8" height="240.1" rx="4.5" fill="#acacaa"/><rect x="566.8" y="12.9" width="466.0" height="235.0" rx="3.2" fill="#ffffff"/><rect x="1002.2" y="22.1" width="29.5" height="29.3" fill="#e5e5e5"/><path d="M1014.4,34.2 L1021.0,40.8 M1021.0,34.2 L1014.4,40.8" stroke="#f1f1f1" stroke-width="1.5"/><text transform="translate(578.0,39.9) scale(1,0.93)" font-size="20" fill="#939393">Virtual Terminal</text><rect x="566.8" y="55.9" width="466" height="3.9" fill="url(#bev)"/><rect x="565.7" y="55.9" width="5.4" height="190.3" fill="#c6c6c6"/><rect x="565.7" y="55.9" width="1.6" height="192" fill="#acacac"/><rect x="571.1" y="59.8" width="431.6" height="186.2" fill="#000"/><rect x="1002.7" y="59.8" width="27.3" height="186.2" fill="#f0f0f0"/><polygon points="1011,78.3 1021.8,78.3 1016.4,70.6" fill="#9d9d9d" stroke="#9d9d9d" stroke-width="1" stroke-linejoin="round"/><polygon points="1011,229.4 1021.8,229.4 1016.4,237.1" fill="#9d9d9d" stroke="#9d9d9d" stroke-width="1" stroke-linejoin="round"/><text transform="translate(573.4,73.10) scale(1,0.8)" font-weight="normal" font-size="16.7" fill="#44e044" stroke="#44e044" stroke-width="0.25" style="white-space:pre;font-family:'Liberation Mono',monospace">LEDs&#160;Display!</text><text transform="translate(573.4,90.95) scale(1,0.8)" font-weight="normal" font-size="16.7" fill="#44e044" stroke="#44e044" stroke-width="0.25" style="white-space:pre;font-family:'Liberation Mono',monospace">Display&#160;Mode&#160;=&#160;0</text><text transform="translate(573.4,108.80) scale(1,0.8)" font-weight="normal" font-size="16.7" fill="#44e044" stroke="#44e044" stroke-width="0.25" style="white-space:pre;font-family:'Liberation Mono',monospace">Display&#160;ON!</text></g>
<line x1="758.6" y1="250.6" x2="955.5" y2="250.6" stroke="#9a3a3a" stroke-width="1.2" opacity="0.8"/>
</g></g>
</svg>
</body></html>
